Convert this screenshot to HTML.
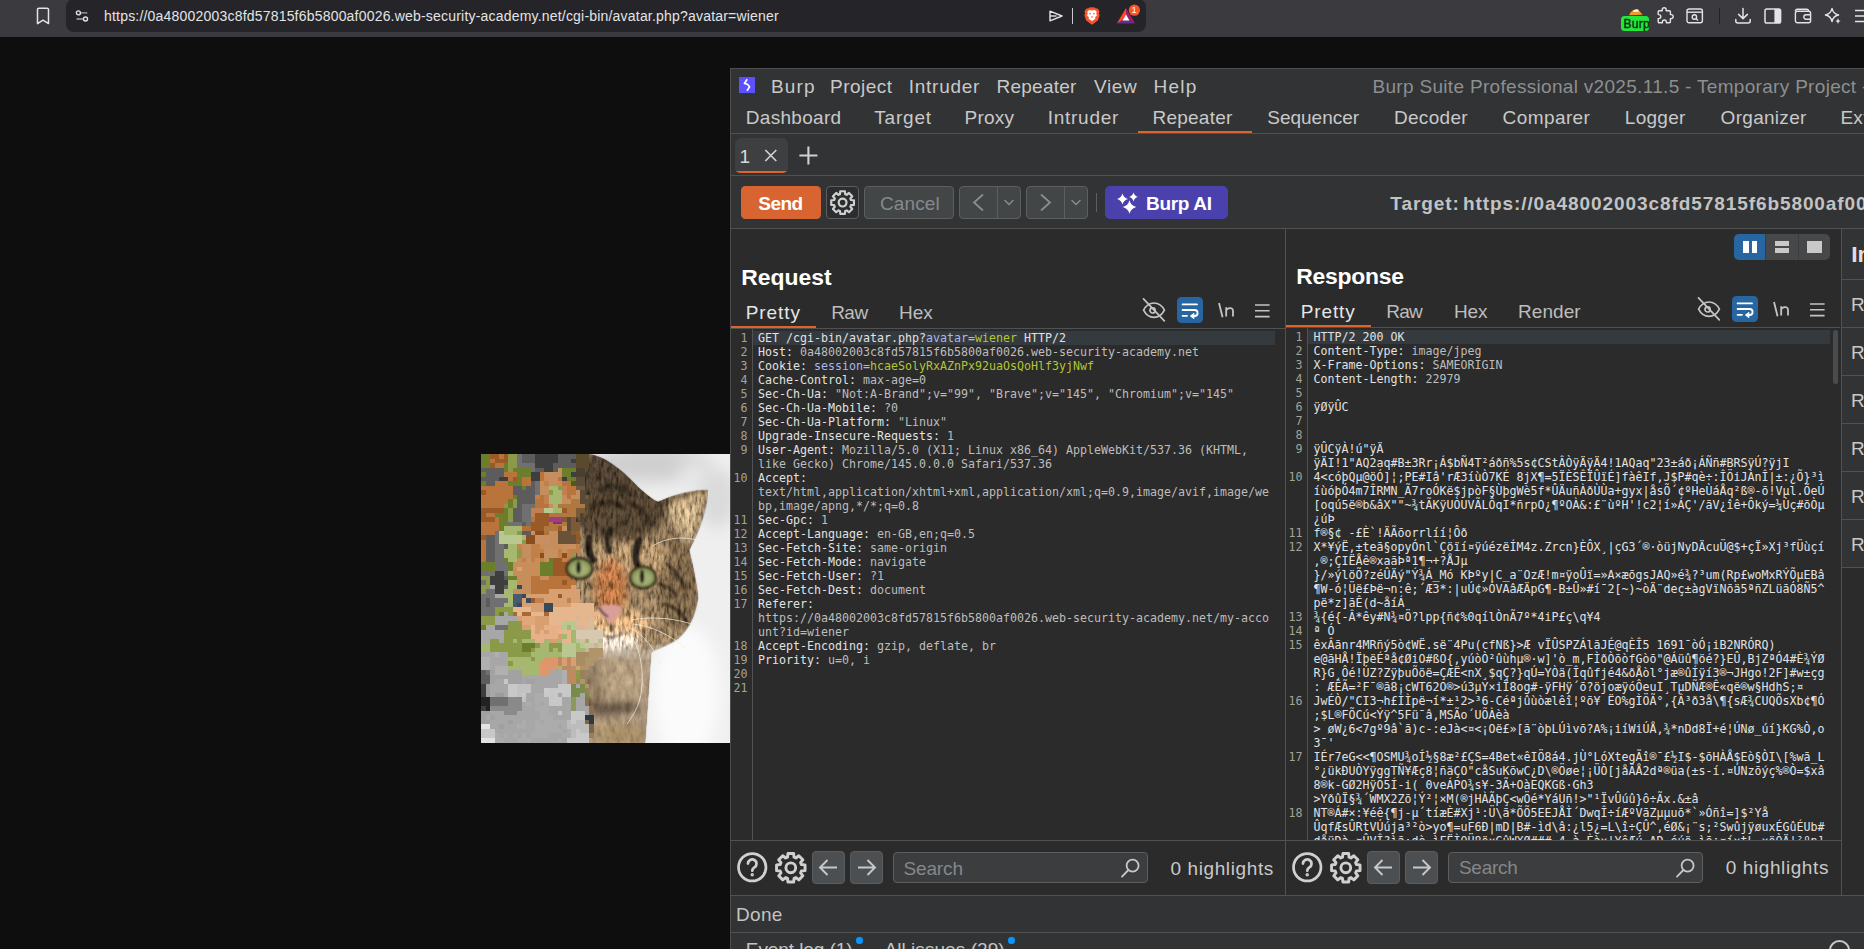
<!DOCTYPE html>
<html lang="en"><head><meta charset="utf-8"><title>avatar.php</title>
<style>
*{box-sizing:border-box;margin:0;padding:0}
html,body{width:1864px;height:949px;overflow:hidden;background:#0e0e0e}
body{position:relative;font-family:"Liberation Sans", sans-serif;}
.a{position:absolute}
.t{position:absolute;white-space:pre;line-height:1;font-family:"Liberation Sans", sans-serif}
.ln{position:absolute;background:#4f5153}
.ed{position:absolute;font-family:"DejaVu Sans Mono", "Liberation Mono", monospace;font-size:11.63px;line-height:14px;white-space:pre;color:#d4d4d4}
.ed div{height:14px}
.ed .h{color:#e2e2e2}
.ed .v{color:#bdbdbd}
.ed .p{color:#a9b7ee}
.ed .g{color:#b4c632}
.no{position:absolute;font-family:"DejaVu Sans Mono", "Liberation Mono", monospace;font-size:11.63px;line-height:14px;white-space:pre;color:#a3a396;text-align:right;width:20px}
.no div{height:14px}
.btn{position:absolute;border-radius:4px}
svg{position:absolute;overflow:visible}
</style></head><body>
<div class="a" style="left:0;top:0;width:1864px;height:37px;background:#3b3b3f"></div>
<div class="a" style="left:66px;top:-1px;width:1080px;height:32.6px;background:#252529;border-radius:8px"></div>
<svg style="left:36px;top:7px" width="14" height="18" viewBox="0 0 14 18" fill="none" stroke="#e4e4e7" stroke-width="1.5" stroke-linejoin="round"><path d="M1.5 2.6a1.4 1.4 0 0 1 1.4-1.4h8.2a1.4 1.4 0 0 1 1.4 1.4V16.6L7 13.2 1.5 16.6Z"/></svg>
<svg style="left:75px;top:9px" width="14" height="14" viewBox="0 0 14 14" fill="none" stroke="#e4e4e7" stroke-width="1.4" stroke-linecap="round"><circle cx="3.4" cy="3.9" r="2"/><path d="M6.6 3.9H11.8" stroke="#a9a9ad"/><circle cx="10.5" cy="10" r="2"/><path d="M2 10H7.4" stroke="#a9a9ad"/></svg>
<svg style="left:1048px;top:9px" width="16" height="14" viewBox="0 0 16 14" fill="none" stroke="#e4e4e7" stroke-width="1.4" stroke-linejoin="round"><path d="M2 2.2 14 7 2 11.8Z"/><path d="M2 7H8.6"/></svg>
<div class="a" style="left:1072px;top:8px;width:1px;height:16px;background:#c9c9cc"></div>
<svg style="left:1084px;top:7px" width="16" height="18" viewBox="0 0 16 18"><path d="M8 0.2 10.6 0.4 12 1.6 13.6 1.4 15.6 4.4 15 6 15.6 8.4 13.8 13.4 8 17.8 2.2 13.4 0.4 8.4 1 6 0.4 4.4 2.4 1.4 4 1.6 5.4 0.4Z" fill="#fb542b"/><path d="M8 3.4 10.8 3 12.8 4.8 12.2 6.6 13 8.4 11 10.2 11.4 11.8 8 14 4.6 11.8 5 10.2 3 8.4 3.8 6.6 3.2 4.8 5.2 3Z" fill="#fff"/><path d="M5.2 5.8 7 6.4 6.6 7.6 5.4 7.2ZM10.8 5.8 9 6.4 9.4 7.6 10.6 7.2ZM7.2 9.6 8 9 8.8 9.6 8 11.4Z" fill="#fb542b"/></svg>
<svg style="left:1116px;top:7px" width="26" height="18" viewBox="0 0 26 18"><path d="M10 1 0.8 16.6 10 11.4Z" fill="#ff4724"/><path d="M10 1 19.2 16.6 10 11.4Z" fill="#9e1f63"/><path d="M0.8 16.6H19.2L10 11.4Z" fill="#662d91"/><path d="M10 7.6 6.6 13.4H13.4Z" fill="#fff"/><circle cx="18.4" cy="3.2" r="5.6" fill="#fb542b"/></svg>
<span class="t" style="left:1131.6px;top:5.4px;font-size:9.5px;color:#fff;font-weight:400">1</span>
<svg style="left:1628px;top:8px" width="16" height="8" viewBox="0 0 16 8"><path d="M1 7.2C3 3 6 0.6 10 1.2l4.6 5.6Z" fill="#f59a23"/><path d="M5 2.4 9.4 1.6 11 3.6 6 4Z" fill="#fff"/></svg>
<div class="a" style="left:1621px;top:16px;width:28px;height:14.5px;border-radius:3.5px;background:#22e63c;overflow:hidden"><span class="t" style="left:2.4px;top:1.9px;font-size:12px;color:#0b2b10;letter-spacing:0.3px;-webkit-text-stroke:0.35px #0b2b10">Burp</span></div>
<svg style="left:1655.4px;top:6px" width="19" height="19" viewBox="0 0 19 19" fill="none" stroke="#e4e4e7" stroke-width="1.4" stroke-linejoin="round"><path d="M7.2 3.8a2 2 0 1 1 4 0V4.8H14.4a1 1 0 0 1 1 1V8.6H16.2a2 2 0 1 1 0 4H15.4V15.8a1 1 0 0 1-1 1H11.4V16a2 2 0 1 0-4 0v.8H4.2a1 1 0 0 1-1-1V12.6H3.8a2 2 0 1 0 0-4H3.2V5.8a1 1 0 0 1 1-1H7.2Z"/></svg>
<svg style="left:1686px;top:8px" width="18" height="16" viewBox="0 0 18 16" fill="none" stroke="#e4e4e7" stroke-width="1.4"><rect x="1" y="1" width="15.4" height="13.8" rx="2"/><path d="M1 4.2H16.4"/><circle cx="8.4" cy="9" r="2.2"/><path d="M10 10.6 12 12.6"/></svg>
<div class="a" style="left:1718.5px;top:8px;width:1.5px;height:16px;background:#232326"></div>
<svg style="left:1734px;top:7px" width="18" height="18" viewBox="0 0 18 18" fill="none" stroke="#e4e4e7" stroke-width="1.5" stroke-linecap="round" stroke-linejoin="round"><path d="M9 1.4V11.4M4.6 7.4 9 11.6 13.4 7.4"/><path d="M1.8 12.6V14a2 2 0 0 0 2 2H14.2a2 2 0 0 0 2-2V12.6"/></svg>
<svg style="left:1764px;top:8px" width="18" height="16" viewBox="0 0 18 16"><rect x="1" y="1" width="15.6" height="14" rx="1.8" fill="none" stroke="#e4e4e7" stroke-width="1.5"/><path d="M10.4 1H15a1.6 1.6 0 0 1 1.6 1.6V13.4A1.6 1.6 0 0 1 15 15H10.4Z" fill="#e4e4e7"/></svg>
<svg style="left:1794px;top:8px" width="18" height="16" viewBox="0 0 18 16" fill="none" stroke="#e4e4e7" stroke-width="1.4" stroke-linejoin="round"><path d="M1.4 3.2a2 2 0 0 1 2-2H12.6a2 2 0 0 1 2 2"/><rect x="1.4" y="3.2" width="15.2" height="11.6" rx="2"/><path d="M16.6 6.8H12a2.2 2.2 0 0 0 0 4.4H16.6"/></svg>
<svg style="left:1824px;top:7px" width="18" height="18" viewBox="0 0 18 18" fill="none" stroke="#e4e4e7" stroke-width="1.4" stroke-linejoin="round"><path d="M8 1.4C8.8 5.4 10.4 7.2 14.6 8 10.4 8.8 8.8 10.6 8 14.6 7.2 10.6 5.6 8.8 1.4 8 5.6 7.2 7.2 5.4 8 1.4Z"/><path d="M14 11c.4 2 1.1 2.8 3 3.1-1.9.3-2.6 1.1-3 3.1-.4-2-1.1-2.8-3-3.1 1.9-.3 2.6-1.1 3-3.1Z" fill="#e4e4e7" stroke="none"/></svg>
<svg style="left:1854.5px;top:9px" width="12" height="14" viewBox="0 0 12 14" stroke="#e4e4e7" stroke-width="1.5" fill="none"><path d="M0 1.4H12M0 7H12M0 12.6H12"/></svg>
<svg style="left:481px;top:454px;overflow:hidden" width="249" height="289" viewBox="0 0 249 289"><defs><filter id="b2" x="-20%" y="-20%" width="140%" height="140%"><feGaussianBlur stdDeviation="2"/></filter><filter id="b4" x="-30%" y="-30%" width="160%" height="160%"><feGaussianBlur stdDeviation="4"/></filter><filter id="b8" x="-40%" y="-40%" width="180%" height="180%"><feGaussianBlur stdDeviation="8"/></filter><filter id="b1" x="-20%" y="-20%" width="140%" height="140%"><feGaussianBlur stdDeviation="0.8"/></filter><filter id="fur" x="0" y="0" width="100%" height="100%"><feTurbulence type="fractalNoise" baseFrequency="0.34 0.11" numOctaves="3" seed="11" result="n"/><feColorMatrix in="n" type="matrix" values="1.5 1.5 0 0 -0.95  1.5 1.5 0 0 -0.95  1.5 1.5 0 0 -0.95  0 0 0 0 1" result="g"/><feComposite in="SourceGraphic" in2="g" operator="arithmetic" k1="1.55" k2="0.45" k3="0" k4="0" result="m"/><feComposite in="m" in2="SourceGraphic" operator="in"/></filter><filter id="fur2" x="0" y="0" width="100%" height="100%"><feTurbulence type="fractalNoise" baseFrequency="0.2 0.09" numOctaves="3" seed="5" result="n"/><feColorMatrix in="n" type="matrix" values="0.8 0.8 0 0 -0.3  0.8 0.8 0 0 -0.3  0.8 0.8 0 0 -0.3  0 0 0 0 1" result="g"/><feComposite in="SourceGraphic" in2="g" operator="arithmetic" k1="0.9" k2="0.62" k3="0" k4="0" result="m"/><feComposite in="m" in2="SourceGraphic" operator="in"/></filter><linearGradient id="gt" x1="0" y1="0" x2="0" y2="1"><stop offset="0.655" stop-color="#fff"/><stop offset="0.715" stop-color="#000"/></linearGradient><linearGradient id="gb" x1="0" y1="0" x2="0" y2="1"><stop offset="0.655" stop-color="#000"/><stop offset="0.715" stop-color="#fff"/></linearGradient><mask id="top" maskUnits="userSpaceOnUse" x="0" y="0" width="249" height="289"><rect width="249" height="289" fill="url(#gt)"/></mask><mask id="bot" maskUnits="userSpaceOnUse" x="0" y="0" width="249" height="289"><rect width="249" height="289" fill="url(#gb)"/></mask><clipPath id="hc"><path d="M88 0H108C122 2 140 14 158 34C166 41 172 46 177 48C194 40 212 36 227 36C226 56 218 78 208 96C212 112 216 130 217 144C214 164 206 180 192 188C182 193 174 196 170 198C168 230 166 260 164 289H100C96 262 90 240 92 222C84 200 70 170 72 130C74 90 80 40 88 0Z"/></clipPath></defs><rect width="249" height="289" fill="#efefef"/><g filter="url(#b8)"><ellipse cx="170" cy="10" rx="60" ry="18" fill="#cfcfcf"/><ellipse cx="236" cy="44" rx="20" ry="30" fill="#dadada"/><ellipse cx="205" cy="240" rx="34" ry="70" fill="#fbfbfb"/><ellipse cx="212" cy="20" rx="14" ry="14" fill="#e6e6e6"/></g><g mask="url(#bot)"><g filter="url(#fur2)"><g filter="url(#b1)"><path d="M88 0H108C122 2 140 14 158 34C166 41 172 46 177 48C194 40 212 36 227 36C226 56 218 78 208 96C212 112 216 130 217 144C214 164 206 180 192 188C182 193 174 196 170 198C168 230 166 260 164 289H100C96 262 90 240 92 222C84 200 70 170 72 130C74 90 80 40 88 0Z" fill="#8a7354"/></g><g clip-path="url(#hc)"><g filter="url(#b4)"><ellipse cx="138" cy="48" rx="52" ry="40" fill="#4a3a2a"/><ellipse cx="118" cy="16" rx="32" ry="18" fill="#443829"/><ellipse cx="198" cy="126" rx="22" ry="50" fill="#6e5a40"/><ellipse cx="150" cy="105" rx="40" ry="18" fill="#a08460"/><ellipse cx="130" cy="135" rx="16" ry="30" fill="#a8693c"/><ellipse cx="134" cy="170" rx="36" ry="14" fill="#c29a6e"/><ellipse cx="130" cy="188" rx="30" ry="8" fill="#e0d2c2"/><rect x="80" y="200" width="100" height="100" fill="#a8937a"/><ellipse cx="140" cy="228" rx="24" ry="24" fill="#b09a7c"/><ellipse cx="112" cy="230" rx="10" ry="26" fill="#8f7a60"/><ellipse cx="128" cy="254" rx="34" ry="7" fill="#5f4e3e"/><ellipse cx="140" cy="280" rx="30" ry="12" fill="#a58c66"/><path d="M186 52 224 40 208 92Z" fill="#b8a07c"/></g><g filter="url(#b1)" stroke="#241c14" stroke-linecap="round" fill="none"><path d="M108 84C106 92 108 100 112 106" stroke-width="7"/><path d="M128 76C126 84 126 92 128 98" stroke-width="5"/><path d="M158 86C154 96 154 104 156 110" stroke-width="7"/><path d="M120 36C128 30 140 32 148 40" stroke-width="6" stroke="#2e261c"/><path d="M112 54C120 46 134 46 142 54" stroke-width="5" stroke="#30271c"/><path d="M150 50C158 52 166 60 170 70" stroke-width="5" stroke="#30271c"/><path d="M186 110C194 116 200 124 204 134" stroke-width="4" stroke="#3a2e20"/><path d="M184 150C192 152 200 158 204 166" stroke-width="4" stroke="#3a2e20"/><path d="M178 130C186 132 192 136 196 142" stroke-width="3" stroke="#3a2e20"/><path d="M180 50C196 42 212 38 226 37" stroke-width="1.6" stroke="#6a5234"/></g></g></g></g><g mask="url(#top)"><g filter="url(#fur)"><g filter="url(#b1)"><path d="M88 0H108C122 2 140 14 158 34C166 41 172 46 177 48C194 40 212 36 227 36C226 56 218 78 208 96C212 112 216 130 217 144C214 164 206 180 192 188C182 193 174 196 170 198C168 230 166 260 164 289H100C96 262 90 240 92 222C84 200 70 170 72 130C74 90 80 40 88 0Z" fill="#8a7354"/></g><g clip-path="url(#hc)"><g filter="url(#b4)"><ellipse cx="138" cy="48" rx="52" ry="40" fill="#4a3a2a"/><ellipse cx="118" cy="16" rx="32" ry="18" fill="#443829"/><ellipse cx="198" cy="126" rx="22" ry="50" fill="#6e5a40"/><ellipse cx="150" cy="105" rx="40" ry="18" fill="#a08460"/><ellipse cx="130" cy="135" rx="16" ry="30" fill="#a8693c"/><ellipse cx="134" cy="170" rx="36" ry="14" fill="#c29a6e"/><ellipse cx="130" cy="188" rx="30" ry="8" fill="#e0d2c2"/><rect x="80" y="200" width="100" height="100" fill="#a8937a"/><ellipse cx="140" cy="228" rx="24" ry="24" fill="#b09a7c"/><ellipse cx="112" cy="230" rx="10" ry="26" fill="#8f7a60"/><ellipse cx="128" cy="254" rx="34" ry="7" fill="#5f4e3e"/><ellipse cx="140" cy="280" rx="30" ry="12" fill="#a58c66"/><path d="M186 52 224 40 208 92Z" fill="#b8a07c"/></g><g filter="url(#b1)" stroke="#241c14" stroke-linecap="round" fill="none"><path d="M108 84C106 92 108 100 112 106" stroke-width="7"/><path d="M128 76C126 84 126 92 128 98" stroke-width="5"/><path d="M158 86C154 96 154 104 156 110" stroke-width="7"/><path d="M120 36C128 30 140 32 148 40" stroke-width="6" stroke="#2e261c"/><path d="M112 54C120 46 134 46 142 54" stroke-width="5" stroke="#30271c"/><path d="M150 50C158 52 166 60 170 70" stroke-width="5" stroke="#30271c"/><path d="M186 110C194 116 200 124 204 134" stroke-width="4" stroke="#3a2e20"/><path d="M184 150C192 152 200 158 204 166" stroke-width="4" stroke="#3a2e20"/><path d="M178 130C186 132 192 136 196 142" stroke-width="3" stroke="#3a2e20"/><path d="M180 50C196 42 212 38 226 37" stroke-width="1.6" stroke="#6a5234"/></g></g></g></g><g filter="url(#b1)"><path d="M117 153C122 150 136 150 141 153C141 160 134 165 130 170C126 165 117 160 117 153Z" fill="#d9a09a"/><path d="M118 153C120 158 124 161 127 163M130 170V178" stroke="#2a1c16" stroke-width="2" fill="none"/><path d="M120 180C126 184 134 184 142 179" stroke="#5a4634" stroke-width="1.4" fill="none"/></g><g stroke="#f4efe6" stroke-width="0.8" fill="none" opacity="0.9"><path d="M146 176C158 190 164 214 160 240C158 252 152 262 146 270"/><path d="M150 174C164 182 174 196 180 210"/><path d="M152 170C170 172 188 180 204 194"/><path d="M150 166C170 162 196 164 216 172"/><path d="M172 92C184 84 200 82 216 86"/></g><g shape-rendering="crispEdges"><rect x="0" y="0" width="9" height="4.5" fill="#6c7d2c"/><rect x="9" y="0" width="9" height="4.5" fill="#9a5a28"/><rect x="18" y="0" width="4.5" height="4.5" fill="#b9743c"/><rect x="22.5" y="0" width="4.5" height="4.5" fill="#9a5a28"/><rect x="27" y="0" width="9" height="4.5" fill="#8a9a48"/><rect x="36" y="0" width="4.5" height="4.5" fill="#707070"/><rect x="40.5" y="0" width="13.5" height="4.5" fill="#5c5c5c"/><rect x="54" y="0" width="22.5" height="4.5" fill="#3e3e3e"/><rect x="76.5" y="0" width="18" height="4.5" fill="#5c5c5c"/><rect x="94.5" y="0" width="13.5" height="4.5" fill="#5a4a2c"/><rect x="0" y="4.5" width="9" height="4.5" fill="#6c7d2c"/><rect x="9" y="4.5" width="4.5" height="4.5" fill="#b9743c"/><rect x="13.5" y="4.5" width="13.5" height="4.5" fill="#9a5a28"/><rect x="27" y="4.5" width="9" height="4.5" fill="#8a9a48"/><rect x="36" y="4.5" width="4.5" height="4.5" fill="#707070"/><rect x="40.5" y="4.5" width="13.5" height="4.5" fill="#5c5c5c"/><rect x="54" y="4.5" width="22.5" height="4.5" fill="#3e3e3e"/><rect x="76.5" y="4.5" width="13.5" height="4.5" fill="#5c5c5c"/><rect x="90" y="4.5" width="4.5" height="4.5" fill="#3e3e3e"/><rect x="94.5" y="4.5" width="13.5" height="4.5" fill="#5a4a2c"/><rect x="0" y="9" width="9" height="4.5" fill="#6c7d2c"/><rect x="9" y="9" width="4.5" height="4.5" fill="#9a5a28"/><rect x="13.5" y="9" width="9" height="4.5" fill="#b9743c"/><rect x="22.5" y="9" width="4.5" height="4.5" fill="#6c7d2c"/><rect x="27" y="9" width="9" height="4.5" fill="#8a9a48"/><rect x="36" y="9" width="18" height="4.5" fill="#707070"/><rect x="54" y="9" width="18" height="4.5" fill="#3e3e3e"/><rect x="72" y="9" width="22.5" height="4.5" fill="#5c5c5c"/><rect x="94.5" y="9" width="13.5" height="4.5" fill="#5a4a2c"/><rect x="0" y="13.5" width="22.5" height="4.5" fill="#5c5c5c"/><rect x="22.5" y="13.5" width="4.5" height="4.5" fill="#6c7d2c"/><rect x="27" y="13.5" width="4.5" height="4.5" fill="#8a9a48"/><rect x="31.5" y="13.5" width="18" height="4.5" fill="#6c7d2c"/><rect x="49.5" y="13.5" width="4.5" height="4.5" fill="#707070"/><rect x="54" y="13.5" width="9" height="4.5" fill="#5c5c5c"/><rect x="63" y="13.5" width="9" height="4.5" fill="#3e3e3e"/><rect x="72" y="13.5" width="4.5" height="4.5" fill="#5c5c5c"/><rect x="76.5" y="13.5" width="4.5" height="4.5" fill="#c68e5c"/><rect x="81" y="13.5" width="13.5" height="4.5" fill="#6c7d2c"/><rect x="94.5" y="13.5" width="9" height="4.5" fill="#4a4030"/><rect x="0" y="18" width="4.5" height="4.5" fill="#6c7d2c"/><rect x="4.5" y="18" width="18" height="4.5" fill="#5c5c5c"/><rect x="22.5" y="18" width="13.5" height="4.5" fill="#b9743c"/><rect x="36" y="18" width="13.5" height="4.5" fill="#6c7d2c"/><rect x="49.5" y="18" width="9" height="4.5" fill="#3e3e3e"/><rect x="58.5" y="18" width="4.5" height="4.5" fill="#b9743c"/><rect x="63" y="18" width="18" height="4.5" fill="#c68e5c"/><rect x="81" y="18" width="9" height="4.5" fill="#6c7d2c"/><rect x="90" y="18" width="4.5" height="4.5" fill="#3e3e3e"/><rect x="94.5" y="18" width="9" height="4.5" fill="#4a4030"/><rect x="0" y="22.5" width="18" height="4.5" fill="#5c5c5c"/><rect x="18" y="22.5" width="9" height="4.5" fill="#3e3e3e"/><rect x="27" y="22.5" width="4.5" height="4.5" fill="#b9743c"/><rect x="31.5" y="22.5" width="4.5" height="4.5" fill="#9a5a28"/><rect x="36" y="22.5" width="4.5" height="4.5" fill="#6c7d2c"/><rect x="40.5" y="22.5" width="9" height="4.5" fill="#b9743c"/><rect x="49.5" y="22.5" width="9" height="4.5" fill="#3e3e3e"/><rect x="58.5" y="22.5" width="4.5" height="4.5" fill="#b9743c"/><rect x="63" y="22.5" width="4.5" height="4.5" fill="#c88a58"/><rect x="67.5" y="22.5" width="9" height="4.5" fill="#c68e5c"/><rect x="76.5" y="22.5" width="4.5" height="4.5" fill="#b9743c"/><rect x="81" y="22.5" width="4.5" height="4.5" fill="#3e3e3e"/><rect x="85.5" y="22.5" width="9" height="4.5" fill="#6c7d2c"/><rect x="94.5" y="22.5" width="9" height="4.5" fill="#5a4a38"/><rect x="0" y="27" width="4.5" height="4.5" fill="#6c7d2c"/><rect x="4.5" y="27" width="9" height="4.5" fill="#5c5c5c"/><rect x="13.5" y="27" width="13.5" height="4.5" fill="#b9743c"/><rect x="27" y="27" width="13.5" height="4.5" fill="#6c7d2c"/><rect x="40.5" y="27" width="9" height="4.5" fill="#b9743c"/><rect x="49.5" y="27" width="4.5" height="4.5" fill="#5c5c5c"/><rect x="54" y="27" width="4.5" height="4.5" fill="#707070"/><rect x="58.5" y="27" width="4.5" height="4.5" fill="#c68e5c"/><rect x="63" y="27" width="4.5" height="4.5" fill="#c08050"/><rect x="67.5" y="27" width="9" height="4.5" fill="#c68e5c"/><rect x="76.5" y="27" width="4.5" height="4.5" fill="#c88a58"/><rect x="81" y="27" width="9" height="4.5" fill="#b9743c"/><rect x="90" y="27" width="4.5" height="4.5" fill="#4a5a20"/><rect x="94.5" y="27" width="9" height="4.5" fill="#5a4a38"/><rect x="0" y="31.5" width="31.5" height="4.5" fill="#b9743c"/><rect x="31.5" y="31.5" width="9" height="4.5" fill="#5c5c5c"/><rect x="40.5" y="31.5" width="4.5" height="4.5" fill="#6c7d2c"/><rect x="45" y="31.5" width="9" height="4.5" fill="#5c5c5c"/><rect x="54" y="31.5" width="4.5" height="4.5" fill="#707070"/><rect x="58.5" y="31.5" width="9" height="4.5" fill="#c68e5c"/><rect x="67.5" y="31.5" width="9" height="4.5" fill="#a6b870"/><rect x="76.5" y="31.5" width="4.5" height="4.5" fill="#8a9a48"/><rect x="81" y="31.5" width="4.5" height="4.5" fill="#c08050"/><rect x="85.5" y="31.5" width="9" height="4.5" fill="#b9743c"/><rect x="94.5" y="31.5" width="9" height="4.5" fill="#6a5a40"/><rect x="0" y="36" width="4.5" height="4.5" fill="#9a5a28"/><rect x="4.5" y="36" width="27" height="4.5" fill="#b9743c"/><rect x="31.5" y="36" width="22.5" height="4.5" fill="#5c5c5c"/><rect x="54" y="36" width="4.5" height="4.5" fill="#707070"/><rect x="58.5" y="36" width="9" height="4.5" fill="#c68e5c"/><rect x="67.5" y="36" width="4.5" height="4.5" fill="#8a9a48"/><rect x="72" y="36" width="9" height="4.5" fill="#a6b870"/><rect x="81" y="36" width="4.5" height="4.5" fill="#c08050"/><rect x="85.5" y="36" width="9" height="4.5" fill="#b9743c"/><rect x="94.5" y="36" width="4.5" height="4.5" fill="#c68e5c"/><rect x="99" y="36" width="4.5" height="4.5" fill="#5a4a38"/><rect x="0" y="40.5" width="31.5" height="4.5" fill="#b9743c"/><rect x="31.5" y="40.5" width="4.5" height="4.5" fill="#6c7d2c"/><rect x="36" y="40.5" width="18" height="4.5" fill="#5c5c5c"/><rect x="54" y="40.5" width="4.5" height="4.5" fill="#c08050"/><rect x="58.5" y="40.5" width="4.5" height="4.5" fill="#b9743c"/><rect x="63" y="40.5" width="4.5" height="4.5" fill="#c08050"/><rect x="67.5" y="40.5" width="13.5" height="4.5" fill="#a6b870"/><rect x="81" y="40.5" width="4.5" height="4.5" fill="#c68e5c"/><rect x="85.5" y="40.5" width="4.5" height="4.5" fill="#b9743c"/><rect x="90" y="40.5" width="9" height="4.5" fill="#c68e5c"/><rect x="99" y="40.5" width="4.5" height="4.5" fill="#5a4a38"/><rect x="103.5" y="40.5" width="4.5" height="4.5" fill="#6a5a40"/><rect x="0" y="45" width="27" height="4.5" fill="#b9743c"/><rect x="27" y="45" width="4.5" height="4.5" fill="#6c7d2c"/><rect x="31.5" y="45" width="4.5" height="4.5" fill="#8a9a48"/><rect x="36" y="45" width="18" height="4.5" fill="#5c5c5c"/><rect x="54" y="45" width="9" height="4.5" fill="#b9743c"/><rect x="63" y="45" width="4.5" height="4.5" fill="#c08050"/><rect x="67.5" y="45" width="13.5" height="4.5" fill="#a6b870"/><rect x="81" y="45" width="9" height="4.5" fill="#c68e5c"/><rect x="90" y="45" width="9" height="4.5" fill="#b07840"/><rect x="99" y="45" width="9" height="4.5" fill="#5a4a38"/><rect x="0" y="49.5" width="22.5" height="4.5" fill="#b9743c"/><rect x="22.5" y="49.5" width="4.5" height="4.5" fill="#8a9a48"/><rect x="27" y="49.5" width="4.5" height="4.5" fill="#6c7d2c"/><rect x="31.5" y="49.5" width="4.5" height="4.5" fill="#8a9a48"/><rect x="36" y="49.5" width="4.5" height="4.5" fill="#5c5c5c"/><rect x="40.5" y="49.5" width="13.5" height="4.5" fill="#707070"/><rect x="54" y="49.5" width="13.5" height="4.5" fill="#b9743c"/><rect x="67.5" y="49.5" width="4.5" height="4.5" fill="#c68e5c"/><rect x="72" y="49.5" width="4.5" height="4.5" fill="#a6b870"/><rect x="76.5" y="49.5" width="27" height="4.5" fill="#b07840"/><rect x="103.5" y="49.5" width="4.5" height="4.5" fill="#5a4a38"/><rect x="0" y="54" width="22.5" height="4.5" fill="#9a5a28"/><rect x="22.5" y="54" width="4.5" height="4.5" fill="#6c7d2c"/><rect x="27" y="54" width="4.5" height="4.5" fill="#8a9a48"/><rect x="31.5" y="54" width="9" height="4.5" fill="#5c5c5c"/><rect x="40.5" y="54" width="9" height="4.5" fill="#707070"/><rect x="49.5" y="54" width="13.5" height="4.5" fill="#c08050"/><rect x="63" y="54" width="9" height="4.5" fill="#b8c890"/><rect x="72" y="54" width="9" height="4.5" fill="#a6b870"/><rect x="81" y="54" width="4.5" height="4.5" fill="#9a5a28"/><rect x="85.5" y="54" width="9" height="4.5" fill="#b07840"/><rect x="94.5" y="54" width="9" height="4.5" fill="#7a5a38"/><rect x="0" y="58.5" width="4.5" height="4.5" fill="#9a5a28"/><rect x="4.5" y="58.5" width="9" height="4.5" fill="#b9743c"/><rect x="13.5" y="58.5" width="13.5" height="4.5" fill="#6c7d2c"/><rect x="27" y="58.5" width="4.5" height="4.5" fill="#8a9a48"/><rect x="31.5" y="58.5" width="9" height="4.5" fill="#5c5c5c"/><rect x="40.5" y="58.5" width="9" height="4.5" fill="#707070"/><rect x="49.5" y="58.5" width="4.5" height="4.5" fill="#c08050"/><rect x="54" y="58.5" width="13.5" height="4.5" fill="#9a5a28"/><rect x="67.5" y="58.5" width="27" height="4.5" fill="#b07840"/><rect x="94.5" y="58.5" width="4.5" height="4.5" fill="#7a5a38"/><rect x="0" y="63" width="13.5" height="4.5" fill="#9a5a28"/><rect x="13.5" y="63" width="4.5" height="4.5" fill="#b9743c"/><rect x="18" y="63" width="9" height="4.5" fill="#6c7d2c"/><rect x="27" y="63" width="4.5" height="4.5" fill="#8a9a48"/><rect x="31.5" y="63" width="9" height="4.5" fill="#5c5c5c"/><rect x="40.5" y="63" width="9" height="4.5" fill="#707070"/><rect x="49.5" y="63" width="4.5" height="4.5" fill="#b07840"/><rect x="54" y="63" width="13.5" height="4.5" fill="#9a5a28"/><rect x="67.5" y="63" width="13.5" height="4.5" fill="#b07840"/><rect x="81" y="63" width="4.5" height="4.5" fill="#7a5a38"/><rect x="85.5" y="63" width="4.5" height="4.5" fill="#5a4a38"/><rect x="90" y="63" width="4.5" height="4.5" fill="#7a5a38"/><rect x="0" y="67.5" width="18" height="4.5" fill="#b9743c"/><rect x="18" y="67.5" width="9" height="4.5" fill="#6c7d2c"/><rect x="27" y="67.5" width="13.5" height="4.5" fill="#707070"/><rect x="40.5" y="67.5" width="4.5" height="4.5" fill="#5c5c5c"/><rect x="45" y="67.5" width="4.5" height="4.5" fill="#707070"/><rect x="49.5" y="67.5" width="18" height="4.5" fill="#9a5a28"/><rect x="67.5" y="67.5" width="18" height="4.5" fill="#b07840"/><rect x="85.5" y="67.5" width="4.5" height="4.5" fill="#5a4a38"/><rect x="90" y="67.5" width="9" height="4.5" fill="#7a5a38"/><rect x="0" y="72" width="18" height="4.5" fill="#b9743c"/><rect x="18" y="72" width="4.5" height="4.5" fill="#6c7d2c"/><rect x="22.5" y="72" width="18" height="4.5" fill="#a6b870"/><rect x="40.5" y="72" width="9" height="4.5" fill="#b07038"/><rect x="49.5" y="72" width="13.5" height="4.5" fill="#9a5a28"/><rect x="63" y="72" width="13.5" height="4.5" fill="#b07840"/><rect x="76.5" y="72" width="4.5" height="4.5" fill="#9a5a28"/><rect x="81" y="72" width="4.5" height="4.5" fill="#c68e5c"/><rect x="85.5" y="72" width="4.5" height="4.5" fill="#5a4a38"/><rect x="90" y="72" width="9" height="4.5" fill="#7a5a38"/><rect x="0" y="76.5" width="13.5" height="4.5" fill="#b9743c"/><rect x="13.5" y="76.5" width="4.5" height="4.5" fill="#707070"/><rect x="18" y="76.5" width="4.5" height="4.5" fill="#b8c890"/><rect x="22.5" y="76.5" width="13.5" height="4.5" fill="#a6b870"/><rect x="36" y="76.5" width="4.5" height="4.5" fill="#8a9a48"/><rect x="40.5" y="76.5" width="9" height="4.5" fill="#5c5c5c"/><rect x="49.5" y="76.5" width="4.5" height="4.5" fill="#c89060"/><rect x="54" y="76.5" width="9" height="4.5" fill="#8a4e1e"/><rect x="63" y="76.5" width="4.5" height="4.5" fill="#b07038"/><rect x="67.5" y="76.5" width="9" height="4.5" fill="#c68e5c"/><rect x="76.5" y="76.5" width="13.5" height="4.5" fill="#6a5238"/><rect x="90" y="76.5" width="4.5" height="4.5" fill="#8a5a30"/><rect x="94.5" y="76.5" width="4.5" height="4.5" fill="#9a5a28"/><rect x="0" y="81" width="4.5" height="4.5" fill="#9a5a28"/><rect x="4.5" y="81" width="9" height="4.5" fill="#5c5c5c"/><rect x="13.5" y="81" width="4.5" height="4.5" fill="#707070"/><rect x="18" y="81" width="22.5" height="4.5" fill="#b8c890"/><rect x="40.5" y="81" width="4.5" height="4.5" fill="#a6b870"/><rect x="45" y="81" width="9" height="4.5" fill="#8a4e1e"/><rect x="54" y="81" width="13.5" height="4.5" fill="#c89060"/><rect x="67.5" y="81" width="9" height="4.5" fill="#c68e5c"/><rect x="76.5" y="81" width="18" height="4.5" fill="#6a5238"/><rect x="94.5" y="81" width="4.5" height="4.5" fill="#8a5a30"/><rect x="0" y="85.5" width="4.5" height="4.5" fill="#b9743c"/><rect x="4.5" y="85.5" width="9" height="4.5" fill="#5c5c5c"/><rect x="13.5" y="85.5" width="4.5" height="4.5" fill="#707070"/><rect x="18" y="85.5" width="22.5" height="4.5" fill="#b8c890"/><rect x="40.5" y="85.5" width="4.5" height="4.5" fill="#8a9a48"/><rect x="45" y="85.5" width="9" height="4.5" fill="#8a4e1e"/><rect x="54" y="85.5" width="13.5" height="4.5" fill="#c89060"/><rect x="67.5" y="85.5" width="9" height="4.5" fill="#c68e5c"/><rect x="76.5" y="85.5" width="18" height="4.5" fill="#6a5238"/><rect x="94.5" y="85.5" width="4.5" height="4.5" fill="#8a5a30"/><rect x="0" y="90" width="4.5" height="4.5" fill="#b9743c"/><rect x="4.5" y="90" width="9" height="4.5" fill="#5c5c5c"/><rect x="13.5" y="90" width="9" height="4.5" fill="#707070"/><rect x="22.5" y="90" width="4.5" height="4.5" fill="#5c5c5c"/><rect x="27" y="90" width="9" height="4.5" fill="#a6b870"/><rect x="36" y="90" width="4.5" height="4.5" fill="#c48650"/><rect x="40.5" y="90" width="9" height="4.5" fill="#c68e5c"/><rect x="49.5" y="90" width="9" height="4.5" fill="#c08048"/><rect x="58.5" y="90" width="22.5" height="4.5" fill="#c68e5c"/><rect x="81" y="90" width="13.5" height="4.5" fill="#c89060"/><rect x="94.5" y="90" width="4.5" height="4.5" fill="#c08048"/><rect x="0" y="94.5" width="4.5" height="4.5" fill="#b9743c"/><rect x="4.5" y="94.5" width="9" height="4.5" fill="#5c5c5c"/><rect x="13.5" y="94.5" width="9" height="4.5" fill="#707070"/><rect x="22.5" y="94.5" width="13.5" height="4.5" fill="#a6b870"/><rect x="36" y="94.5" width="4.5" height="4.5" fill="#8a9a48"/><rect x="40.5" y="94.5" width="9" height="4.5" fill="#c68e5c"/><rect x="49.5" y="94.5" width="13.5" height="4.5" fill="#c08048"/><rect x="63" y="94.5" width="13.5" height="4.5" fill="#c89060"/><rect x="76.5" y="94.5" width="4.5" height="4.5" fill="#c08048"/><rect x="81" y="94.5" width="4.5" height="4.5" fill="#c68e5c"/><rect x="85.5" y="94.5" width="13.5" height="4.5" fill="#c08048"/><rect x="0" y="99" width="4.5" height="4.5" fill="#b9743c"/><rect x="4.5" y="99" width="9" height="4.5" fill="#5c5c5c"/><rect x="13.5" y="99" width="9" height="4.5" fill="#707070"/><rect x="22.5" y="99" width="13.5" height="4.5" fill="#a6b870"/><rect x="36" y="99" width="4.5" height="4.5" fill="#8a9a48"/><rect x="40.5" y="99" width="9" height="4.5" fill="#c68e5c"/><rect x="49.5" y="99" width="9" height="4.5" fill="#c08048"/><rect x="58.5" y="99" width="4.5" height="4.5" fill="#8a4e1e"/><rect x="63" y="99" width="13.5" height="4.5" fill="#c89060"/><rect x="76.5" y="99" width="4.5" height="4.5" fill="#c08048"/><rect x="81" y="99" width="4.5" height="4.5" fill="#8a4e1e"/><rect x="85.5" y="99" width="4.5" height="4.5" fill="#c08048"/><rect x="90" y="99" width="4.5" height="4.5" fill="#8a9a58"/><rect x="0" y="103.5" width="4.5" height="4.5" fill="#b9743c"/><rect x="4.5" y="103.5" width="9" height="4.5" fill="#5c5c5c"/><rect x="13.5" y="103.5" width="9" height="4.5" fill="#707070"/><rect x="22.5" y="103.5" width="4.5" height="4.5" fill="#6c7d2c"/><rect x="27" y="103.5" width="9" height="4.5" fill="#a6b870"/><rect x="36" y="103.5" width="4.5" height="4.5" fill="#c98d58"/><rect x="40.5" y="103.5" width="4.5" height="4.5" fill="#c08048"/><rect x="45" y="103.5" width="4.5" height="4.5" fill="#c89060"/><rect x="49.5" y="103.5" width="4.5" height="4.5" fill="#c08048"/><rect x="54" y="103.5" width="4.5" height="4.5" fill="#c68e5c"/><rect x="58.5" y="103.5" width="4.5" height="4.5" fill="#c08048"/><rect x="63" y="103.5" width="4.5" height="4.5" fill="#c68e5c"/><rect x="67.5" y="103.5" width="4.5" height="4.5" fill="#6c7d2c"/><rect x="72" y="103.5" width="9" height="4.5" fill="#9a5a28"/><rect x="81" y="103.5" width="9" height="4.5" fill="#c08048"/><rect x="90" y="103.5" width="4.5" height="4.5" fill="#8a9a58"/><rect x="0" y="108" width="13.5" height="4.5" fill="#6c7d2c"/><rect x="13.5" y="108" width="13.5" height="4.5" fill="#707070"/><rect x="27" y="108" width="4.5" height="4.5" fill="#6c7d2c"/><rect x="31.5" y="108" width="9" height="4.5" fill="#c68e5c"/><rect x="40.5" y="108" width="18" height="4.5" fill="#c98d58"/><rect x="58.5" y="108" width="13.5" height="4.5" fill="#6c7d2c"/><rect x="72" y="108" width="18" height="4.5" fill="#9a5a28"/><rect x="0" y="112.5" width="13.5" height="4.5" fill="#6c7d2c"/><rect x="13.5" y="112.5" width="13.5" height="4.5" fill="#707070"/><rect x="27" y="112.5" width="4.5" height="4.5" fill="#6c7d2c"/><rect x="31.5" y="112.5" width="4.5" height="4.5" fill="#c68e5c"/><rect x="36" y="112.5" width="4.5" height="4.5" fill="#d9a273"/><rect x="40.5" y="112.5" width="18" height="4.5" fill="#c98d58"/><rect x="58.5" y="112.5" width="13.5" height="4.5" fill="#6c7d2c"/><rect x="72" y="112.5" width="13.5" height="4.5" fill="#9a5a28"/><rect x="85.5" y="112.5" width="4.5" height="4.5" fill="#8a4e1e"/><rect x="0" y="117" width="13.5" height="4.5" fill="#707070"/><rect x="13.5" y="117" width="9" height="4.5" fill="#3e3e3e"/><rect x="22.5" y="117" width="4.5" height="4.5" fill="#707070"/><rect x="27" y="117" width="4.5" height="4.5" fill="#a6b870"/><rect x="31.5" y="117" width="9" height="4.5" fill="#c98d58"/><rect x="40.5" y="117" width="13.5" height="4.5" fill="#c68e5c"/><rect x="54" y="117" width="4.5" height="4.5" fill="#c98d58"/><rect x="58.5" y="117" width="13.5" height="4.5" fill="#6c7d2c"/><rect x="72" y="117" width="18" height="4.5" fill="#9a5a28"/><rect x="0" y="121.5" width="9" height="4.5" fill="#8a9a48"/><rect x="9" y="121.5" width="13.5" height="4.5" fill="#3e3e3e"/><rect x="22.5" y="121.5" width="4.5" height="4.5" fill="#5c5c5c"/><rect x="27" y="121.5" width="9" height="4.5" fill="#6c7d2c"/><rect x="36" y="121.5" width="13.5" height="4.5" fill="#c68e5c"/><rect x="49.5" y="121.5" width="9" height="4.5" fill="#b9743c"/><rect x="58.5" y="121.5" width="9" height="4.5" fill="#c68e5c"/><rect x="67.5" y="121.5" width="22.5" height="4.5" fill="#b9743c"/><rect x="0" y="126" width="4.5" height="4.5" fill="#707070"/><rect x="4.5" y="126" width="4.5" height="4.5" fill="#8a9a48"/><rect x="9" y="126" width="18" height="4.5" fill="#3e3e3e"/><rect x="27" y="126" width="9" height="4.5" fill="#a6b870"/><rect x="36" y="126" width="4.5" height="4.5" fill="#c98d58"/><rect x="40.5" y="126" width="4.5" height="4.5" fill="#c68e5c"/><rect x="45" y="126" width="4.5" height="4.5" fill="#c98d58"/><rect x="49.5" y="126" width="31.5" height="4.5" fill="#b9743c"/><rect x="81" y="126" width="4.5" height="4.5" fill="#9a5a28"/><rect x="85.5" y="126" width="9" height="4.5" fill="#b9743c"/><rect x="0" y="130.5" width="9" height="4.5" fill="#8a9a48"/><rect x="9" y="130.5" width="4.5" height="4.5" fill="#a7a7a7"/><rect x="13.5" y="130.5" width="9" height="4.5" fill="#3e3e3e"/><rect x="22.5" y="130.5" width="4.5" height="4.5" fill="#5c5c5c"/><rect x="27" y="130.5" width="9" height="4.5" fill="#a6b870"/><rect x="36" y="130.5" width="4.5" height="4.5" fill="#3a4858"/><rect x="40.5" y="130.5" width="9" height="4.5" fill="#c68e5c"/><rect x="49.5" y="130.5" width="40.5" height="4.5" fill="#b9743c"/><rect x="90" y="130.5" width="4.5" height="4.5" fill="#d8a070"/><rect x="0" y="135" width="4.5" height="4.5" fill="#8a9a48"/><rect x="4.5" y="135" width="9" height="4.5" fill="#707070"/><rect x="13.5" y="135" width="9" height="4.5" fill="#3e3e3e"/><rect x="22.5" y="135" width="9" height="4.5" fill="#a6b870"/><rect x="31.5" y="135" width="18" height="4.5" fill="#c68e5c"/><rect x="49.5" y="135" width="18" height="4.5" fill="#b9743c"/><rect x="67.5" y="135" width="31.5" height="4.5" fill="#d8a070"/><rect x="0" y="139.5" width="13.5" height="4.5" fill="#707070"/><rect x="13.5" y="139.5" width="9" height="4.5" fill="#a7a7a7"/><rect x="22.5" y="139.5" width="9" height="4.5" fill="#a6b870"/><rect x="31.5" y="139.5" width="9" height="4.5" fill="#4a5a6a"/><rect x="40.5" y="139.5" width="4.5" height="4.5" fill="#3a4858"/><rect x="45" y="139.5" width="31.5" height="4.5" fill="#d8a070"/><rect x="76.5" y="139.5" width="4.5" height="4.5" fill="#9a5a28"/><rect x="81" y="139.5" width="18" height="4.5" fill="#d8a070"/><rect x="0" y="144" width="4.5" height="4.5" fill="#707070"/><rect x="4.5" y="144" width="4.5" height="4.5" fill="#5c5c5c"/><rect x="9" y="144" width="18" height="4.5" fill="#707070"/><rect x="27" y="144" width="4.5" height="4.5" fill="#a6b870"/><rect x="31.5" y="144" width="9" height="4.5" fill="#4a5a6a"/><rect x="40.5" y="144" width="4.5" height="4.5" fill="#d8a070"/><rect x="45" y="144" width="4.5" height="4.5" fill="#3a4858"/><rect x="49.5" y="144" width="4.5" height="4.5" fill="#9a5a28"/><rect x="54" y="144" width="9" height="4.5" fill="#c08050"/><rect x="63" y="144" width="22.5" height="4.5" fill="#d8a070"/><rect x="85.5" y="144" width="4.5" height="4.5" fill="#c08050"/><rect x="90" y="144" width="9" height="4.5" fill="#d8a070"/><rect x="0" y="148.5" width="4.5" height="4.5" fill="#707070"/><rect x="4.5" y="148.5" width="4.5" height="4.5" fill="#5c5c5c"/><rect x="9" y="148.5" width="13.5" height="4.5" fill="#707070"/><rect x="22.5" y="148.5" width="9" height="4.5" fill="#a6b870"/><rect x="31.5" y="148.5" width="4.5" height="4.5" fill="#4a5a6a"/><rect x="36" y="148.5" width="4.5" height="4.5" fill="#3a4858"/><rect x="40.5" y="148.5" width="22.5" height="4.5" fill="#d8a070"/><rect x="63" y="148.5" width="9" height="4.5" fill="#3a4858"/><rect x="72" y="148.5" width="18" height="4.5" fill="#d8a070"/><rect x="90" y="148.5" width="22.5" height="4.5" fill="#e6b68e"/><rect x="0" y="153" width="13.5" height="4.5" fill="#707070"/><rect x="13.5" y="153" width="18" height="4.5" fill="#8a9a48"/><rect x="31.5" y="153" width="18" height="4.5" fill="#e6b68e"/><rect x="49.5" y="153" width="13.5" height="4.5" fill="#d8a070"/><rect x="63" y="153" width="9" height="4.5" fill="#3a4858"/><rect x="72" y="153" width="40.5" height="4.5" fill="#e6b68e"/><rect x="0" y="157.5" width="13.5" height="4.5" fill="#707070"/><rect x="13.5" y="157.5" width="4.5" height="4.5" fill="#8a9a48"/><rect x="18" y="157.5" width="4.5" height="4.5" fill="#6c7d2c"/><rect x="22.5" y="157.5" width="4.5" height="4.5" fill="#a7a7a7"/><rect x="27" y="157.5" width="4.5" height="4.5" fill="#8a9a48"/><rect x="31.5" y="157.5" width="4.5" height="4.5" fill="#a8683a"/><rect x="36" y="157.5" width="4.5" height="4.5" fill="#e6b68e"/><rect x="40.5" y="157.5" width="9" height="4.5" fill="#a8683a"/><rect x="49.5" y="157.5" width="13.5" height="4.5" fill="#e6b68e"/><rect x="63" y="157.5" width="4.5" height="4.5" fill="#a8683a"/><rect x="67.5" y="157.5" width="49.5" height="4.5" fill="#e6b68e"/><rect x="0" y="162" width="13.5" height="4.5" fill="#8a9a48"/><rect x="13.5" y="162" width="22.5" height="4.5" fill="#a7a7a7"/><rect x="36" y="162" width="4.5" height="4.5" fill="#d8a070"/><rect x="40.5" y="162" width="13.5" height="4.5" fill="#e0a878"/><rect x="54" y="162" width="13.5" height="4.5" fill="#d8a070"/><rect x="67.5" y="162" width="27" height="4.5" fill="#e6b68e"/><rect x="94.5" y="162" width="4.5" height="4.5" fill="#d8b898"/><rect x="99" y="162" width="4.5" height="4.5" fill="#e6b68e"/><rect x="103.5" y="162" width="4.5" height="4.5" fill="#d8b898"/><rect x="108" y="162" width="4.5" height="4.5" fill="#e6b68e"/><rect x="0" y="166.5" width="13.5" height="4.5" fill="#8a9a48"/><rect x="13.5" y="166.5" width="13.5" height="4.5" fill="#a7a7a7"/><rect x="27" y="166.5" width="13.5" height="4.5" fill="#8a9a48"/><rect x="40.5" y="166.5" width="13.5" height="4.5" fill="#e0a878"/><rect x="54" y="166.5" width="13.5" height="4.5" fill="#d8a070"/><rect x="67.5" y="166.5" width="13.5" height="4.5" fill="#e6b68e"/><rect x="81" y="166.5" width="13.5" height="4.5" fill="#b8c890"/><rect x="94.5" y="166.5" width="13.5" height="4.5" fill="#e6b68e"/><rect x="108" y="166.5" width="4.5" height="4.5" fill="#cdc3a4"/><rect x="0" y="171" width="4.5" height="4.5" fill="#6c7d2c"/><rect x="4.5" y="171" width="9" height="4.5" fill="#a7a7a7"/><rect x="13.5" y="171" width="13.5" height="4.5" fill="#707070"/><rect x="27" y="171" width="13.5" height="4.5" fill="#8a9a48"/><rect x="40.5" y="171" width="9" height="4.5" fill="#d8a070"/><rect x="49.5" y="171" width="4.5" height="4.5" fill="#e6b68e"/><rect x="54" y="171" width="9" height="4.5" fill="#d8a070"/><rect x="63" y="171" width="18" height="4.5" fill="#e8b088"/><rect x="81" y="171" width="4.5" height="4.5" fill="#b8c890"/><rect x="85.5" y="171" width="4.5" height="4.5" fill="#a6b870"/><rect x="90" y="171" width="4.5" height="4.5" fill="#b8c890"/><rect x="94.5" y="171" width="9" height="4.5" fill="#d8b898"/><rect x="103.5" y="171" width="4.5" height="4.5" fill="#e6b68e"/><rect x="108" y="171" width="4.5" height="4.5" fill="#cdc3a4"/><rect x="0" y="175.5" width="22.5" height="4.5" fill="#a7a7a7"/><rect x="22.5" y="175.5" width="27" height="4.5" fill="#8a9a48"/><rect x="49.5" y="175.5" width="4.5" height="4.5" fill="#e8b088"/><rect x="54" y="175.5" width="4.5" height="4.5" fill="#d8a070"/><rect x="58.5" y="175.5" width="4.5" height="4.5" fill="#e8b088"/><rect x="63" y="175.5" width="4.5" height="4.5" fill="#d8a070"/><rect x="67.5" y="175.5" width="9" height="4.5" fill="#e8b088"/><rect x="76.5" y="175.5" width="13.5" height="4.5" fill="#e6b68e"/><rect x="90" y="175.5" width="4.5" height="4.5" fill="#a6b870"/><rect x="94.5" y="175.5" width="27" height="4.5" fill="#d8c8b0"/><rect x="0" y="180" width="22.5" height="4.5" fill="#a7a7a7"/><rect x="22.5" y="180" width="27" height="4.5" fill="#8a9a48"/><rect x="49.5" y="180" width="27" height="4.5" fill="#e8b088"/><rect x="76.5" y="180" width="4.5" height="4.5" fill="#d8a070"/><rect x="81" y="180" width="4.5" height="4.5" fill="#a6b870"/><rect x="85.5" y="180" width="4.5" height="4.5" fill="#e6b68e"/><rect x="90" y="180" width="4.5" height="4.5" fill="#a6b870"/><rect x="94.5" y="180" width="27" height="4.5" fill="#d8c8b0"/><rect x="0" y="184.5" width="9" height="4.5" fill="#a7a7a7"/><rect x="9" y="184.5" width="9" height="4.5" fill="#8a9a48"/><rect x="18" y="184.5" width="4.5" height="4.5" fill="#a7a7a7"/><rect x="22.5" y="184.5" width="9" height="4.5" fill="#8a9a48"/><rect x="31.5" y="184.5" width="4.5" height="4.5" fill="#a6b870"/><rect x="36" y="184.5" width="4.5" height="4.5" fill="#8a9a48"/><rect x="40.5" y="184.5" width="13.5" height="4.5" fill="#a6b870"/><rect x="54" y="184.5" width="9" height="4.5" fill="#e8b088"/><rect x="63" y="184.5" width="4.5" height="4.5" fill="#a6b870"/><rect x="67.5" y="184.5" width="9" height="4.5" fill="#d8a070"/><rect x="76.5" y="184.5" width="4.5" height="4.5" fill="#a6b870"/><rect x="81" y="184.5" width="9" height="4.5" fill="#e6b68e"/><rect x="90" y="184.5" width="4.5" height="4.5" fill="#a6b870"/><rect x="94.5" y="184.5" width="4.5" height="4.5" fill="#b8c890"/><rect x="99" y="184.5" width="4.5" height="4.5" fill="#cdc3a4"/><rect x="103.5" y="184.5" width="4.5" height="4.5" fill="#a6b870"/><rect x="108" y="184.5" width="9" height="4.5" fill="#d8c8b0"/><rect x="117" y="184.5" width="4.5" height="4.5" fill="#c0b898"/><rect x="0" y="189" width="9" height="4.5" fill="#a6b870"/><rect x="9" y="189" width="31.5" height="4.5" fill="#8a9a48"/><rect x="40.5" y="189" width="13.5" height="4.5" fill="#6c7d2c"/><rect x="54" y="189" width="4.5" height="4.5" fill="#8a9a48"/><rect x="58.5" y="189" width="9" height="4.5" fill="#a6b870"/><rect x="67.5" y="189" width="13.5" height="4.5" fill="#8a9a48"/><rect x="81" y="189" width="13.5" height="4.5" fill="#b8c890"/><rect x="94.5" y="189" width="4.5" height="4.5" fill="#a6b870"/><rect x="99" y="189" width="4.5" height="4.5" fill="#b8c890"/><rect x="103.5" y="189" width="9" height="4.5" fill="#cdc3a4"/><rect x="112.5" y="189" width="4.5" height="4.5" fill="#c0b898"/><rect x="117" y="189" width="4.5" height="4.5" fill="#cdc3a4"/><rect x="0" y="193.5" width="9" height="4.5" fill="#a6b870"/><rect x="9" y="193.5" width="31.5" height="4.5" fill="#8a9a48"/><rect x="40.5" y="193.5" width="9" height="4.5" fill="#6c7d2c"/><rect x="49.5" y="193.5" width="4.5" height="4.5" fill="#8a9a48"/><rect x="54" y="193.5" width="13.5" height="4.5" fill="#a6b870"/><rect x="67.5" y="193.5" width="4.5" height="4.5" fill="#8a9a48"/><rect x="72" y="193.5" width="4.5" height="4.5" fill="#a6b870"/><rect x="76.5" y="193.5" width="4.5" height="4.5" fill="#8a9a48"/><rect x="81" y="193.5" width="13.5" height="4.5" fill="#b8c890"/><rect x="94.5" y="193.5" width="9" height="4.5" fill="#a6b870"/><rect x="103.5" y="193.5" width="4.5" height="4.5" fill="#c0b898"/><rect x="108" y="193.5" width="13.5" height="4.5" fill="#b0946a"/><rect x="0" y="198" width="13.5" height="4.5" fill="#a7a7a7"/><rect x="13.5" y="198" width="4.5" height="4.5" fill="#b0b0b0"/><rect x="18" y="198" width="9" height="4.5" fill="#a7a7a7"/><rect x="27" y="198" width="22.5" height="4.5" fill="#8a9a48"/><rect x="49.5" y="198" width="31.5" height="4.5" fill="#a6b870"/><rect x="81" y="198" width="13.5" height="4.5" fill="#b8c890"/><rect x="94.5" y="198" width="13.5" height="4.5" fill="#a88c62"/><rect x="108" y="198" width="13.5" height="4.5" fill="#b0946a"/><rect x="0" y="202.5" width="9" height="4.5" fill="#b0b0b0"/><rect x="9" y="202.5" width="18" height="4.5" fill="#a7a7a7"/><rect x="27" y="202.5" width="22.5" height="4.5" fill="#a6b870"/><rect x="49.5" y="202.5" width="4.5" height="4.5" fill="#8a9a48"/><rect x="54" y="202.5" width="9" height="4.5" fill="#a6b870"/><rect x="63" y="202.5" width="13.5" height="4.5" fill="#e0956a"/><rect x="76.5" y="202.5" width="4.5" height="4.5" fill="#c08a60"/><rect x="81" y="202.5" width="4.5" height="4.5" fill="#d8a070"/><rect x="85.5" y="202.5" width="4.5" height="4.5" fill="#c08a60"/><rect x="90" y="202.5" width="4.5" height="4.5" fill="#d8a070"/><rect x="94.5" y="202.5" width="9" height="4.5" fill="#a88c62"/><rect x="103.5" y="202.5" width="13.5" height="4.5" fill="#b0946a"/><rect x="0" y="207" width="9" height="4.5" fill="#b0b0b0"/><rect x="9" y="207" width="18" height="4.5" fill="#a7a7a7"/><rect x="27" y="207" width="4.5" height="4.5" fill="#8a9a48"/><rect x="31.5" y="207" width="27" height="4.5" fill="#a6b870"/><rect x="58.5" y="207" width="18" height="4.5" fill="#e0956a"/><rect x="76.5" y="207" width="4.5" height="4.5" fill="#c08a60"/><rect x="81" y="207" width="4.5" height="4.5" fill="#d8a070"/><rect x="85.5" y="207" width="4.5" height="4.5" fill="#c08a60"/><rect x="90" y="207" width="4.5" height="4.5" fill="#d8a070"/><rect x="94.5" y="207" width="9" height="4.5" fill="#a88c62"/><rect x="103.5" y="207" width="9" height="4.5" fill="#b0946a"/><rect x="0" y="211.5" width="9" height="4.5" fill="#b0b0b0"/><rect x="9" y="211.5" width="4.5" height="4.5" fill="#a7a7a7"/><rect x="13.5" y="211.5" width="13.5" height="4.5" fill="#b0b0b0"/><rect x="27" y="211.5" width="31.5" height="4.5" fill="#a6b870"/><rect x="58.5" y="211.5" width="18" height="4.5" fill="#e0956a"/><rect x="76.5" y="211.5" width="4.5" height="4.5" fill="#a6b870"/><rect x="81" y="211.5" width="9" height="4.5" fill="#c08a60"/><rect x="90" y="211.5" width="4.5" height="4.5" fill="#b0946a"/><rect x="94.5" y="211.5" width="4.5" height="4.5" fill="#d8a070"/><rect x="99" y="211.5" width="9" height="4.5" fill="#b0946a"/><rect x="0" y="216" width="4.5" height="4.5" fill="#5c5c5c"/><rect x="4.5" y="216" width="4.5" height="4.5" fill="#707070"/><rect x="9" y="216" width="4.5" height="4.5" fill="#a2a2a2"/><rect x="13.5" y="216" width="13.5" height="4.5" fill="#b0b0b0"/><rect x="27" y="216" width="13.5" height="4.5" fill="#a2a2a2"/><rect x="40.5" y="216" width="18" height="4.5" fill="#a6b870"/><rect x="58.5" y="216" width="9" height="4.5" fill="#e0956a"/><rect x="67.5" y="216" width="13.5" height="4.5" fill="#a7a7a7"/><rect x="81" y="216" width="4.5" height="4.5" fill="#b0b0b0"/><rect x="85.5" y="216" width="9" height="4.5" fill="#c08a60"/><rect x="94.5" y="216" width="4.5" height="4.5" fill="#8a9a48"/><rect x="99" y="216" width="4.5" height="4.5" fill="#9a8058"/><rect x="0" y="220.5" width="9" height="4.5" fill="#5c5c5c"/><rect x="9" y="220.5" width="31.5" height="4.5" fill="#a2a2a2"/><rect x="40.5" y="220.5" width="40.5" height="4.5" fill="#a7a7a7"/><rect x="81" y="220.5" width="4.5" height="4.5" fill="#b0b0b0"/><rect x="85.5" y="220.5" width="9" height="4.5" fill="#c08a60"/><rect x="94.5" y="220.5" width="4.5" height="4.5" fill="#8a9a48"/><rect x="99" y="220.5" width="4.5" height="4.5" fill="#9a8058"/><rect x="0" y="225" width="9" height="4.5" fill="#5c5c5c"/><rect x="9" y="225" width="4.5" height="4.5" fill="#a2a2a2"/><rect x="13.5" y="225" width="9" height="4.5" fill="#a7a7a7"/><rect x="22.5" y="225" width="4.5" height="4.5" fill="#c8c8c8"/><rect x="27" y="225" width="13.5" height="4.5" fill="#a2a2a2"/><rect x="40.5" y="225" width="4.5" height="4.5" fill="#a7a7a7"/><rect x="45" y="225" width="9" height="4.5" fill="#a2a2a2"/><rect x="54" y="225" width="27" height="4.5" fill="#a7a7a7"/><rect x="81" y="225" width="4.5" height="4.5" fill="#b0b0b0"/><rect x="85.5" y="225" width="9" height="4.5" fill="#c08a60"/><rect x="94.5" y="225" width="4.5" height="4.5" fill="#9a8a50"/><rect x="99" y="225" width="4.5" height="4.5" fill="#b0946a"/><rect x="0" y="229.5" width="4.5" height="4.5" fill="#3e3e3e"/><rect x="4.5" y="229.5" width="4.5" height="4.5" fill="#9c9c9c"/><rect x="9" y="229.5" width="18" height="4.5" fill="#a7a7a7"/><rect x="27" y="229.5" width="9" height="4.5" fill="#c8c8c8"/><rect x="36" y="229.5" width="13.5" height="4.5" fill="#c2c2c2"/><rect x="49.5" y="229.5" width="27" height="4.5" fill="#a7a7a7"/><rect x="76.5" y="229.5" width="13.5" height="4.5" fill="#c8c8c8"/><rect x="90" y="229.5" width="4.5" height="4.5" fill="#7a8a4a"/><rect x="94.5" y="229.5" width="4.5" height="4.5" fill="#a7a7a7"/><rect x="99" y="229.5" width="4.5" height="4.5" fill="#7a8a4a"/><rect x="103.5" y="229.5" width="4.5" height="4.5" fill="#b0946a"/><rect x="0" y="234" width="4.5" height="4.5" fill="#3e3e3e"/><rect x="4.5" y="234" width="4.5" height="4.5" fill="#9c9c9c"/><rect x="9" y="234" width="18" height="4.5" fill="#a7a7a7"/><rect x="27" y="234" width="9" height="4.5" fill="#c8c8c8"/><rect x="36" y="234" width="13.5" height="4.5" fill="#c2c2c2"/><rect x="49.5" y="234" width="13.5" height="4.5" fill="#a7a7a7"/><rect x="63" y="234" width="4.5" height="4.5" fill="#cccccc"/><rect x="67.5" y="234" width="22.5" height="4.5" fill="#c8c8c8"/><rect x="90" y="234" width="13.5" height="4.5" fill="#7a8a4a"/><rect x="103.5" y="234" width="4.5" height="4.5" fill="#9a8058"/><rect x="0" y="238.5" width="4.5" height="4.5" fill="#3e3e3e"/><rect x="4.5" y="238.5" width="4.5" height="4.5" fill="#9c9c9c"/><rect x="9" y="238.5" width="4.5" height="4.5" fill="#a7a7a7"/><rect x="13.5" y="238.5" width="9" height="4.5" fill="#9c9c9c"/><rect x="22.5" y="238.5" width="4.5" height="4.5" fill="#a7a7a7"/><rect x="27" y="238.5" width="9" height="4.5" fill="#c8c8c8"/><rect x="36" y="238.5" width="4.5" height="4.5" fill="#c2c2c2"/><rect x="40.5" y="238.5" width="4.5" height="4.5" fill="#c8c8c8"/><rect x="45" y="238.5" width="9" height="4.5" fill="#a7a7a7"/><rect x="54" y="238.5" width="9" height="4.5" fill="#acacac"/><rect x="63" y="238.5" width="13.5" height="4.5" fill="#c8c8c8"/><rect x="76.5" y="238.5" width="4.5" height="4.5" fill="#a7a7a7"/><rect x="81" y="238.5" width="9" height="4.5" fill="#c8c8c8"/><rect x="90" y="238.5" width="9" height="4.5" fill="#7a8a4a"/><rect x="99" y="238.5" width="4.5" height="4.5" fill="#a7a7a7"/><rect x="103.5" y="238.5" width="4.5" height="4.5" fill="#7a8a4a"/><rect x="0" y="243" width="9" height="4.5" fill="#222222"/><rect x="9" y="243" width="18" height="4.5" fill="#707070"/><rect x="27" y="243" width="13.5" height="4.5" fill="#8a8a8a"/><rect x="40.5" y="243" width="4.5" height="4.5" fill="#c2c2c2"/><rect x="45" y="243" width="9" height="4.5" fill="#a7a7a7"/><rect x="54" y="243" width="13.5" height="4.5" fill="#acacac"/><rect x="67.5" y="243" width="13.5" height="4.5" fill="#c8c8c8"/><rect x="81" y="243" width="9" height="4.5" fill="#a7a7a7"/><rect x="90" y="243" width="4.5" height="4.5" fill="#8a9a5a"/><rect x="94.5" y="243" width="9" height="4.5" fill="#a7a7a7"/><rect x="103.5" y="243" width="4.5" height="4.5" fill="#8a7050"/><rect x="0" y="247.5" width="9" height="4.5" fill="#222222"/><rect x="9" y="247.5" width="18" height="4.5" fill="#707070"/><rect x="27" y="247.5" width="13.5" height="4.5" fill="#8a8a8a"/><rect x="40.5" y="247.5" width="4.5" height="4.5" fill="#a7a7a7"/><rect x="45" y="247.5" width="4.5" height="4.5" fill="#acacac"/><rect x="49.5" y="247.5" width="4.5" height="4.5" fill="#a7a7a7"/><rect x="54" y="247.5" width="4.5" height="4.5" fill="#acacac"/><rect x="58.5" y="247.5" width="4.5" height="4.5" fill="#a7a7a7"/><rect x="63" y="247.5" width="4.5" height="4.5" fill="#acacac"/><rect x="67.5" y="247.5" width="13.5" height="4.5" fill="#c8c8c8"/><rect x="81" y="247.5" width="9" height="4.5" fill="#a7a7a7"/><rect x="90" y="247.5" width="4.5" height="4.5" fill="#8a9a5a"/><rect x="94.5" y="247.5" width="9" height="4.5" fill="#a7a7a7"/><rect x="103.5" y="247.5" width="4.5" height="4.5" fill="#8a7050"/><rect x="0" y="252" width="4.5" height="4.5" fill="#3e3e3e"/><rect x="4.5" y="252" width="4.5" height="4.5" fill="#222222"/><rect x="9" y="252" width="31.5" height="4.5" fill="#8a8a8a"/><rect x="40.5" y="252" width="13.5" height="4.5" fill="#a7a7a7"/><rect x="54" y="252" width="13.5" height="4.5" fill="#acacac"/><rect x="67.5" y="252" width="22.5" height="4.5" fill="#a7a7a7"/><rect x="90" y="252" width="4.5" height="4.5" fill="#8a9a5a"/><rect x="94.5" y="252" width="13.5" height="4.5" fill="#a7a7a7"/><rect x="108" y="252" width="4.5" height="4.5" fill="#8a7050"/><rect x="0" y="256.5" width="9" height="4.5" fill="#a0a0a0"/><rect x="9" y="256.5" width="13.5" height="4.5" fill="#a7a7a7"/><rect x="22.5" y="256.5" width="13.5" height="4.5" fill="#8a8a8a"/><rect x="36" y="256.5" width="22.5" height="4.5" fill="#a7a7a7"/><rect x="58.5" y="256.5" width="9" height="4.5" fill="#acacac"/><rect x="67.5" y="256.5" width="9" height="4.5" fill="#a7a7a7"/><rect x="76.5" y="256.5" width="4.5" height="4.5" fill="#c8c8c8"/><rect x="81" y="256.5" width="9" height="4.5" fill="#a7a7a7"/><rect x="90" y="256.5" width="13.5" height="4.5" fill="#c8c8c8"/><rect x="103.5" y="256.5" width="4.5" height="4.5" fill="#a7a7a7"/><rect x="108" y="256.5" width="4.5" height="4.5" fill="#8a7050"/><rect x="0" y="261" width="4.5" height="4.5" fill="#a0a0a0"/><rect x="4.5" y="261" width="4.5" height="4.5" fill="#a7a7a7"/><rect x="9" y="261" width="4.5" height="4.5" fill="#a0a0a0"/><rect x="13.5" y="261" width="45" height="4.5" fill="#a7a7a7"/><rect x="58.5" y="261" width="13.5" height="4.5" fill="#acacac"/><rect x="72" y="261" width="18" height="4.5" fill="#a7a7a7"/><rect x="90" y="261" width="13.5" height="4.5" fill="#c8c8c8"/><rect x="103.5" y="261" width="9" height="4.5" fill="#2c3844"/><rect x="0" y="265.5" width="9" height="4.5" fill="#a0a0a0"/><rect x="9" y="265.5" width="18" height="4.5" fill="#a7a7a7"/><rect x="27" y="265.5" width="4.5" height="4.5" fill="#a0a0a0"/><rect x="31.5" y="265.5" width="9" height="4.5" fill="#a7a7a7"/><rect x="40.5" y="265.5" width="4.5" height="4.5" fill="#acacac"/><rect x="45" y="265.5" width="9" height="4.5" fill="#a7a7a7"/><rect x="54" y="265.5" width="4.5" height="4.5" fill="#acacac"/><rect x="58.5" y="265.5" width="4.5" height="4.5" fill="#a7a7a7"/><rect x="63" y="265.5" width="22.5" height="4.5" fill="#acacac"/><rect x="85.5" y="265.5" width="4.5" height="4.5" fill="#bcbcbc"/><rect x="90" y="265.5" width="4.5" height="4.5" fill="#c8c8c8"/><rect x="94.5" y="265.5" width="9" height="4.5" fill="#bcbcbc"/><rect x="103.5" y="265.5" width="4.5" height="4.5" fill="#7a6448"/><rect x="108" y="265.5" width="4.5" height="4.5" fill="#2c3844"/><rect x="0" y="270" width="9" height="4.5" fill="#e2e2e2"/><rect x="9" y="270" width="9" height="4.5" fill="#a7a7a7"/><rect x="18" y="270" width="4.5" height="4.5" fill="#a0a0a0"/><rect x="22.5" y="270" width="13.5" height="4.5" fill="#a7a7a7"/><rect x="36" y="270" width="9" height="4.5" fill="#acacac"/><rect x="45" y="270" width="9" height="4.5" fill="#a7a7a7"/><rect x="54" y="270" width="22.5" height="4.5" fill="#acacac"/><rect x="76.5" y="270" width="4.5" height="4.5" fill="#a7a7a7"/><rect x="81" y="270" width="4.5" height="4.5" fill="#acacac"/><rect x="85.5" y="270" width="22.5" height="4.5" fill="#bcbcbc"/><rect x="108" y="270" width="4.5" height="4.5" fill="#7a6448"/><rect x="0" y="274.5" width="13.5" height="4.5" fill="#c8c8c8"/><rect x="13.5" y="274.5" width="40.5" height="4.5" fill="#a7a7a7"/><rect x="54" y="274.5" width="27" height="4.5" fill="#acacac"/><rect x="81" y="274.5" width="4.5" height="4.5" fill="#a7a7a7"/><rect x="85.5" y="274.5" width="4.5" height="4.5" fill="#acacac"/><rect x="90" y="274.5" width="4.5" height="4.5" fill="#bcbcbc"/><rect x="94.5" y="274.5" width="4.5" height="4.5" fill="#c8c8c8"/><rect x="99" y="274.5" width="9" height="4.5" fill="#bcbcbc"/><rect x="108" y="274.5" width="4.5" height="4.5" fill="#7a6448"/><rect x="0" y="279" width="13.5" height="4.5" fill="#c8c8c8"/><rect x="13.5" y="279" width="4.5" height="4.5" fill="#acacac"/><rect x="18" y="279" width="4.5" height="4.5" fill="#a7a7a7"/><rect x="22.5" y="279" width="4.5" height="4.5" fill="#acacac"/><rect x="27" y="279" width="4.5" height="4.5" fill="#a7a7a7"/><rect x="31.5" y="279" width="4.5" height="4.5" fill="#acacac"/><rect x="36" y="279" width="4.5" height="4.5" fill="#a7a7a7"/><rect x="40.5" y="279" width="4.5" height="4.5" fill="#acacac"/><rect x="45" y="279" width="4.5" height="4.5" fill="#a7a7a7"/><rect x="49.5" y="279" width="18" height="4.5" fill="#acacac"/><rect x="67.5" y="279" width="13.5" height="4.5" fill="#a7a7a7"/><rect x="81" y="279" width="9" height="4.5" fill="#acacac"/><rect x="90" y="279" width="4.5" height="4.5" fill="#bcbcbc"/><rect x="94.5" y="279" width="13.5" height="4.5" fill="#c8c8c8"/><rect x="108" y="279" width="4.5" height="4.5" fill="#9a8058"/><rect x="0" y="283.5" width="13.5" height="4.5" fill="#e2e2e2"/><rect x="13.5" y="283.5" width="9" height="4.5" fill="#acacac"/><rect x="22.5" y="283.5" width="13.5" height="4.5" fill="#a7a7a7"/><rect x="36" y="283.5" width="13.5" height="4.5" fill="#acacac"/><rect x="49.5" y="283.5" width="27" height="4.5" fill="#a7a7a7"/><rect x="76.5" y="283.5" width="4.5" height="4.5" fill="#acacac"/><rect x="81" y="283.5" width="4.5" height="4.5" fill="#a7a7a7"/><rect x="85.5" y="283.5" width="22.5" height="4.5" fill="#c8c8c8"/><rect x="0" y="288" width="13.5" height="1" fill="#e2e2e2"/><rect x="13.5" y="288" width="9" height="1" fill="#acacac"/><rect x="22.5" y="288" width="18" height="1" fill="#a7a7a7"/><rect x="40.5" y="288" width="9" height="1" fill="#acacac"/><rect x="49.5" y="288" width="4.5" height="1" fill="#a7a7a7"/><rect x="54" y="288" width="4.5" height="1" fill="#acacac"/><rect x="58.5" y="288" width="27" height="1" fill="#a7a7a7"/><rect x="85.5" y="288" width="22.5" height="1" fill="#c8c8c8"/><rect x="67.5" y="63" width="13.5" height="4.5" fill="#a23a86"/><rect x="72" y="67.5" width="9" height="2" fill="#8c2f70"/></g><g filter="url(#b1)"><ellipse cx="98.5" cy="114.5" rx="13.7" ry="11.2" fill="#1d180f"/><ellipse cx="98.5" cy="114.5" rx="11.5" ry="9" fill="#8f9c5c"/><ellipse cx="98.5" cy="115.5" rx="8.5" ry="6" fill="#a3ad74"/><ellipse cx="97.5" cy="113.5" rx="2.2" ry="6.5" fill="#0c0c08"/><ellipse cx="162" cy="123.5" rx="13.7" ry="11.7" fill="#1d180f"/><ellipse cx="162" cy="123.5" rx="11.5" ry="9.5" fill="#8f9c5c"/><ellipse cx="162" cy="124.5" rx="8.5" ry="6.5" fill="#a3ad74"/><ellipse cx="161" cy="122.5" rx="2.2" ry="7.0" fill="#0c0c08"/></g></svg>
<div class="a" style="left:730px;top:68px;width:1134px;height:881px;background:#323334;border-left:1px solid #4b4d4f;border-top:1px solid #4b4d4f"></div>
<svg style="left:739px;top:77px" width="16" height="16" viewBox="0 0 16 16"><rect width="16" height="16" fill="#5c50ff"/><path d="M8.2 2.3 5.4 6.4 8.4 7.2 10.6 9.8 8 13.7" fill="none" stroke="#fff" stroke-width="1.7" stroke-linejoin="round"/></svg>
<div class="a" style="left:1138px;top:130.5px;width:114px;height:2.5px;background:#e0632a"></div>
<div class="ln" style="left:731px;top:133px;width:1133px;height:1px"></div>
<div class="a" style="left:735px;top:138px;width:53px;height:35px;background:#3e3f40;border-radius:6px 6px 5px 5px;overflow:hidden"><div class="a" style="left:1px;right:1px;bottom:0;height:2.5px;background:#e0632a;border-radius:0 0 4px 4px"></div></div>
<svg style="left:764px;top:149px" width="14" height="14" viewBox="0 0 14 14"><path d="M1.3 1 12.3 12M12.3 1 1.3 12" stroke="#d2d2d2" stroke-width="1.7" fill="none"/></svg>
<svg style="left:799px;top:146px" width="19" height="19" viewBox="0 0 19 19"><path d="M9.4 0.5V18.5M0.4 9.5H18.4" stroke="#d2d2d2" stroke-width="2.1" fill="none"/></svg>
<div class="ln" style="left:731px;top:175px;width:1133px;height:1px"></div>
<div class="btn" style="left:741px;top:186px;width:80px;height:33px;background:#d86431;border-radius:4.5px"></div>
<div class="btn" style="left:826px;top:186px;width:33px;height:33px;background:#2c2d2e;border:1px solid #5c5e60"></div>
<svg style="left:829.8px;top:189.8px" width="25.2" height="25.2" viewBox="0 0 100 100"><path d="M39.7 16.6 L40.9 4.9 L59.1 4.9 L60.3 16.6 L66.3 19.0 L75.4 11.7 L88.3 24.6 L81.0 33.7 L83.4 39.7 L95.1 40.9 L95.1 59.1 L83.4 60.3 L81.0 66.3 L88.3 75.4 L75.4 88.3 L66.3 81.0 L60.3 83.4 L59.1 95.1 L40.9 95.1 L39.7 83.4 L33.7 81.0 L24.6 88.3 L11.7 75.4 L19.0 66.3 L16.6 60.3 L4.9 59.1 L4.9 40.9 L16.6 39.7 L19.0 33.7 L11.7 24.6 L24.6 11.7 L33.7 19.0Z" fill="none" stroke="#d0d0d0" stroke-width="8.7" stroke-linejoin="round"/><circle cx="50" cy="50" r="15.5" fill="none" stroke="#d0d0d0" stroke-width="8.7"/></svg>
<div class="btn" style="left:864px;top:186px;width:90px;height:33px;background:#434647;border:1px solid #5c5e60"></div>
<div class="btn" style="left:959px;top:186px;width:62px;height:33px;background:#434647;border:1px solid #5c5e60"></div>
<div class="a" style="left:997px;top:187px;width:1px;height:31px;background:#5c5e60"></div>
<div class="btn" style="left:1026px;top:186px;width:62px;height:33px;background:#434647;border:1px solid #5c5e60"></div>
<div class="a" style="left:1064px;top:187px;width:1px;height:31px;background:#5c5e60"></div>
<svg style="left:959px;top:186px" width="62" height="33" viewBox="0 0 62 33"><path d="M24 8.5 15 16.5 24 24.5" stroke="#8a8d8f" stroke-width="1.8" fill="none"/><path d="M45.5 14 50 18.5 54.5 14" stroke="#8a8d8f" stroke-width="1.4" fill="none"/></svg>
<svg style="left:1026px;top:186px" width="62" height="33" viewBox="0 0 62 33"><path d="M15 8.5 24 16.5 15 24.5" stroke="#8a8d8f" stroke-width="1.8" fill="none"/><path d="M45.5 14 50 18.5 54.5 14" stroke="#8a8d8f" stroke-width="1.4" fill="none"/></svg>
<div class="a" style="left:1096px;top:192.5px;width:1px;height:19.5px;background:#5c5e60"></div>
<div class="btn" style="left:1105px;top:186px;width:123px;height:33px;background:#4b41ad;border-radius:5px"></div>
<svg style="left:1116.5px;top:191.5px" width="22" height="22" viewBox="0 0 22 22"><path d="M5.5 1.5Q6.654999999999999 5.845000000000001 11.0 7Q6.654999999999999 8.155 5.5 12.5Q4.345000000000001 8.155 0.0 7Q4.345000000000001 5.845000000000001 5.5 1.5ZM16.5 0.5999999999999996Q17.424 4.0760000000000005 20.9 5Q17.424 5.9239999999999995 16.5 9.4Q15.576 5.9239999999999995 12.1 5Q15.576 4.0760000000000005 16.5 0.5999999999999996ZM12.5 8.2Q13.928 13.572 19.3 15Q13.928 16.428 12.5 21.8Q11.072 16.428 5.7 15Q11.072 13.572 12.5 8.2Z" fill="#fff"/></svg>
<div class="ln" style="left:731px;top:228px;width:1133px;height:1px"></div>
<div class="a" style="left:731px;top:229px;width:1110px;height:666px;background:#2b2b2b"></div>
<div class="ln" style="left:1285px;top:229px;width:1px;height:666px"></div>
<div class="ln" style="left:1840.5px;top:229px;width:1px;height:666px"></div>
<div class="a" style="left:1841.5px;top:567px;width:23px;height:328px;background:#2b2b2b"></div>
<div class="ln" style="left:1841.5px;top:279px;width:23px;height:1px"></div>
<div class="ln" style="left:1841.5px;top:327px;width:23px;height:1px"></div>
<div class="ln" style="left:1841.5px;top:375px;width:23px;height:1px"></div>
<div class="ln" style="left:1841.5px;top:423px;width:23px;height:1px"></div>
<div class="ln" style="left:1841.5px;top:471px;width:23px;height:1px"></div>
<div class="ln" style="left:1841.5px;top:519px;width:23px;height:1px"></div>
<div class="ln" style="left:1841.5px;top:567px;width:23px;height:1px"></div>
<div class="a" style="left:731px;top:325.5px;width:85px;height:2.5px;background:#e0632a"></div>
<div class="ln" style="left:731px;top:328px;width:554px;height:1px"></div>
<div class="a" style="left:1286px;top:324.5px;width:85px;height:2.5px;background:#e0632a"></div>
<div class="ln" style="left:1286px;top:327px;width:554px;height:1px"></div>
<svg style="left:1142px;top:298px" width="24" height="24" viewBox="0 0 24 24" fill="none" stroke="#c4c4c4" stroke-width="1.7" stroke-linecap="round"><path d="M1.6 12.2C4 7.4 8 5 12 5s8 2.4 10.4 7.2C20 17 16 19.4 12 19.4S4 17 1.6 12.2Z"/><circle cx="10.6" cy="12.4" r="2.6"/><path d="M1.5 0.8 22.3 22.8"/></svg>
<div class="a" style="left:1177px;top:297px;width:26px;height:26px;border-radius:4.5px;background:#2866a2"></div><svg style="left:1177px;top:297px" width="26" height="26" viewBox="0 0 26 26" fill="none" stroke="#fff" stroke-width="1.8" stroke-linecap="round"><path d="M5.6 7.4H20"/><path d="M5.6 13H17.6a3 3 0 0 1 0 6H15"/><path d="M5.6 18.8H10"/><path d="M16.6 16.6 13.4 19l3.2 2.4z" fill="#fff" stroke-width="1" stroke-linejoin="round"/></svg>
<svg style="left:1218px;top:300px" width="18" height="20" viewBox="0 0 18 20" fill="none" stroke="#c4c4c4" stroke-width="1.8"><path d="M1 3 4.6 17.2"/><path d="M8.2 16.6V7.2M8.2 10.4C9 8 15 6.4 15 11V16.6"/></svg>
<svg style="left:1255px;top:304px" width="15" height="14" viewBox="0 0 15 14" stroke="#c4c4c4" stroke-width="1.6" fill="none"><path d="M0 1H14.6M0 6.8H14.6M0 12.6H14.6"/></svg>
<svg style="left:1697px;top:297px" width="24" height="24" viewBox="0 0 24 24" fill="none" stroke="#c4c4c4" stroke-width="1.7" stroke-linecap="round"><path d="M1.6 12.2C4 7.4 8 5 12 5s8 2.4 10.4 7.2C20 17 16 19.4 12 19.4S4 17 1.6 12.2Z"/><circle cx="10.6" cy="12.4" r="2.6"/><path d="M1.5 0.8 22.3 22.8"/></svg>
<div class="a" style="left:1732px;top:296px;width:26px;height:26px;border-radius:4.5px;background:#2866a2"></div><svg style="left:1732px;top:296px" width="26" height="26" viewBox="0 0 26 26" fill="none" stroke="#fff" stroke-width="1.8" stroke-linecap="round"><path d="M5.6 7.4H20"/><path d="M5.6 13H17.6a3 3 0 0 1 0 6H15"/><path d="M5.6 18.8H10"/><path d="M16.6 16.6 13.4 19l3.2 2.4z" fill="#fff" stroke-width="1" stroke-linejoin="round"/></svg>
<svg style="left:1773px;top:299px" width="18" height="20" viewBox="0 0 18 20" fill="none" stroke="#c4c4c4" stroke-width="1.8"><path d="M1 3 4.6 17.2"/><path d="M8.2 16.6V7.2M8.2 10.4C9 8 15 6.4 15 11V16.6"/></svg>
<svg style="left:1810px;top:303px" width="15" height="14" viewBox="0 0 15 14" stroke="#c4c4c4" stroke-width="1.6" fill="none"><path d="M0 1H14.6M0 6.8H14.6M0 12.6H14.6"/></svg>
<div class="a" style="left:1734px;top:234px;width:96px;height:26px;border-radius:5px;background:#47484a;overflow:hidden"><div class="a" style="left:0;top:0;width:31px;height:26px;background:#2866a2"></div><div class="a" style="left:31px;top:0;width:1px;height:26px;background:#3b3c3e"></div><div class="a" style="left:63.5px;top:0;width:1px;height:26px;background:#3b3c3e"></div><div class="a" style="left:9px;top:7px;width:5.5px;height:12px;background:#fff"></div><div class="a" style="left:17.5px;top:7px;width:5.5px;height:12px;background:#fff"></div><div class="a" style="left:41px;top:7px;width:14px;height:4.5px;background:#c9c9c9"></div><div class="a" style="left:41px;top:14px;width:14px;height:4.5px;background:#c9c9c9"></div><div class="a" style="left:73px;top:7px;width:14.5px;height:11.5px;background:#c9c9c9"></div></div>
<div class="ln" style="left:752px;top:329px;width:1px;height:511px"></div>
<div class="ln" style="left:1307px;top:328px;width:1px;height:512px"></div>
<div class="a" style="left:753px;top:331px;width:522px;height:14px;background:#353a3e"></div>
<div class="a" style="left:1308px;top:330px;width:522px;height:14px;background:#353a3e"></div>
<div class="a" style="left:1832.5px;top:330px;width:5.5px;height:54px;background:#4a4b4d;border-radius:3px"></div>
<div class="no" style="left:727.6px;top:331px"><div>1</div><div>2</div><div>3</div><div>4</div><div>5</div><div>6</div><div>7</div><div>8</div><div>9</div><div></div><div>10</div><div></div><div></div><div>11</div><div>12</div><div>13</div><div>14</div><div>15</div><div>16</div><div>17</div><div></div><div></div><div>18</div><div>19</div><div>20</div><div>21</div></div>
<div class="ed" style="left:758px;top:331px"><div><span class="h">GET /cgi-bin/avatar.php?</span><span class="p">avatar=</span><span class="g">wiener</span><span class="h"> HTTP/2</span></div><div><span class="h">Host: </span><span class="v">0a48002003c8fd57815f6b5800af0026.web-security-academy.net</span></div><div><span class="h">Cookie: </span><span class="p">session=</span><span class="g">hcaeSolyRxAZnPx92uaOsQoHlf3yjNwf</span></div><div><span class="h">Cache-Control: </span><span class="v">max-age=0</span></div><div><span class="h">Sec-Ch-Ua: </span><span class="v">&quot;Not:A-Brand&quot;;v=&quot;99&quot;, &quot;Brave&quot;;v=&quot;145&quot;, &quot;Chromium&quot;;v=&quot;145&quot;</span></div><div><span class="h">Sec-Ch-Ua-Mobile: </span><span class="v">?0</span></div><div><span class="h">Sec-Ch-Ua-Platform: </span><span class="v">&quot;Linux&quot;</span></div><div><span class="h">Upgrade-Insecure-Requests: </span><span class="v">1</span></div><div><span class="h">User-Agent: </span><span class="v">Mozilla/5.0 (X11; Linux x86_64) AppleWebKit/537.36 (KHTML,</span></div><div><span class="v">like Gecko) Chrome/145.0.0.0 Safari/537.36</span></div><div><span class="h">Accept: </span></div><div><span class="v">text/html,application/xhtml+xml,application/xml;q=0.9,image/avif,image/we</span></div><div><span class="v">bp,image/apng,*/*;q=0.8</span></div><div><span class="h">Sec-Gpc: </span><span class="v">1</span></div><div><span class="h">Accept-Language: </span><span class="v">en-GB,en;q=0.5</span></div><div><span class="h">Sec-Fetch-Site: </span><span class="v">same-origin</span></div><div><span class="h">Sec-Fetch-Mode: </span><span class="v">navigate</span></div><div><span class="h">Sec-Fetch-User: </span><span class="v">?1</span></div><div><span class="h">Sec-Fetch-Dest: </span><span class="v">document</span></div><div><span class="h">Referer: </span></div><div><span class="v">https://0a48002003c8fd57815f6b5800af0026.web-security-academy.net/my-acco</span></div><div><span class="v">unt?id=wiener</span></div><div><span class="h">Accept-Encoding: </span><span class="v">gzip, deflate, br</span></div><div><span class="h">Priority: </span><span class="v">u=0, i</span></div><div></div><div></div></div>
<div class="a" style="left:1286px;top:328px;width:554px;height:512px;overflow:hidden">
<div class="no" style="left:-3.4px;top:2px"><div>1</div><div>2</div><div>3</div><div>4</div><div>5</div><div>6</div><div>7</div><div>8</div><div>9</div><div></div><div>10</div><div></div><div></div><div></div><div>11</div><div>12</div><div></div><div></div><div></div><div></div><div>13</div><div>14</div><div>15</div><div></div><div></div><div></div><div>16</div><div></div><div></div><div></div><div>17</div><div></div><div></div><div></div><div>18</div><div></div><div></div></div>
<div class="ed" style="left:27.5px;top:2px"><div><span class="h">HTTP/2 200 OK</span></div><div><span class="h">Content-Type: </span><span class="v">image/jpeg</span></div><div><span class="h">X-Frame-Options: </span><span class="v">SAMEORIGIN</span></div><div><span class="h">Content-Length: </span><span class="v">22979</span></div><div></div><div><span class="h">ÿØÿÛC</span></div><div></div><div></div><div><span class="h">ÿÛCÿÀ!ú&quot;ÿÄ</span></div><div><span class="h">ÿÄI!1&quot;AQ2aq#B±3Rr¡Á$bÑ4T²áðñ%5s¢CStÂÒÿÄÿÄ4!1AQaq&quot;23±áð¡ÁÑñ#BRSÿÚ?ÿjI</span></div><div><span class="h">4&lt;cóþQµ@öÓ]¦;PE#Iâ&#x27;rÆ3íùÒ7KÉ 8jX¶=5ÏÈSÊÏÛïÉ]fàêIf,J$P#qè÷:ÎÖiJÀnÎ|±:¿Õ}³ì</span></div><div><span class="h">íùóþÓ4m7ÎRMN_Ã7roÓKë$jpòF§ÙþgWè5f*ÛÄuñÀðÙÙa+gyx|åsÕ´¢ºHeÙáÅq²ß®-õ!Vµl.ÕeÚ</span></div><div><span class="h">[oqú5ë®b&amp;âX&quot;&quot;~¾tÃKÿUÒUVÃLÔqI*ñrpO¿¶ºOÀ&amp;:£¨ùºH&#x27;!c2¦í»ÁÇ&#x27;/ãV¿îê+Ôký=¼Ùç#õÒµ</span></div><div><span class="h">¿úÞ</span></div><div><span class="h">f®§¢ -£È`!ÄÃõorrlíí¦Ôð</span></div><div><span class="h">X*¥ýË,±teã§opyÓnl`Çöïí¤ÿúézëÍM4z.Zrcn}ÈÔX¸|çG3´®·òüjNyDÄcuÜ@$+çÏ»Xj³fÜùçí</span></div><div><span class="h">,®;ÇIËÅê®xaãÞª1¶¬+?ÅJµ</span></div><div><span class="h">}/»ýlöÕ?zéÛÄý&quot;Ý¾Á_Mó KÞºy|C_a¨OzÆ!m¤ÿoÛï=»A×æõgsJAQ»é¾?³um(Rp£woMxRÝÕµEBâ</span></div><div><span class="h">¶W-ó¦Üë£Þë¬n:ê;´Æ3*:|uÚ¢»ÓVAâÆÄpG¶-B±Û»#í¯2[~)~òÄ¨deç±àgVïNõä5ªñZLüãÓ8Ñ5^</span></div><div><span class="h">pë*z]ãÊ(d~åíÁ</span></div><div><span class="h">¾{é{-Â*êy#N¾¤Ö?lpp{ñ¢%0qílÒnÃ7º*4iP£ç\q¥4</span></div><div><span class="h">ª Ó</span></div><div><span class="h">êxÂãnr4MRñý5ò¢WË.së¨4Pu(cfNß}&gt;Æ vÏÛSPZÁlãJÉ@qÈÎ5 1691¯òÓ¡iB2NRÓRQ)</span></div><div><span class="h">e@ãHÅ!ÏþëÉªå¢ØiO#ßO{,yúòÒ²ûùhµ®·w]&#x27;ò_m,FÌðÒõòfGòõ&quot;@Áüû¶öé?}EÛ,BjZªÓ4#È¾ÝØ</span></div><div><span class="h">R}G¸Ôé!ÚZ?ZÿþuÕöë=ÇÆË&lt;nX¸$qÇ?}qÚ=YÒä(Îqûfjé4&amp;ðÅòl°jæ®ûÍÿí3®¬JHgo!2F]#w±çg</span></div><div><span class="h">: ÆÊÃ=²F¯®ã8¡cWT62O®&gt;ú3µY×iÏ8og#-ÿFHÿ´õ?öjoæÿóÔeuI¸TµDÑÆ®Ê«që®w§HdhS;¤</span></div><div><span class="h">JwÉÒ/&quot;CI3¬h£ÌÌpë¬í*±¹2&gt;³6-Céªjûùòælêî¦ºõ¥ ËO%gÌÖÃ°,{Â³ð3å\¶{sÆ¾CUQÕsXb¢¶Ó</span></div><div><span class="h">;$L®FÕCú&lt;Ýÿ^5Fü¯â,MSÃo´UÕÀèà</span></div><div><span class="h">&gt; øW¿6&lt;7gº9â`ã)c-:eJà&lt;¤&lt;¡Oë£»[ã¨òþLÚìvõ?A%¡iíWiÚÅ,¾*nDd8Ï+é¦ÚNø_úí}KG%Ò,o</span></div><div><span class="h">3¯&#x27;</span></div><div><span class="h">IÉr7eG&lt;&lt;¶OSMU¾oÍ½§8æ²£ÇS=4Bet«êIÖ8á4.jÙ°LóXtegÃî®¯£½I$-$õHÀÅ$Eò§ÒI\[%wã_L</span></div><div><span class="h">°¿ükÐUÒYÿggTÑ¥Æç8¦ñäÇO&quot;cåSuKõwC¿D\®Öøe¦¡ÜÒ[jåÂÅ2dª®üa(±s-í.¤ÚNzõýç%®Ò=$xâ</span></div><div><span class="h">8®k-GØ2HÿÖ5Í-i( 0veÁPO¾s¥-3Ã+OàEQKGß·Gh3</span></div><div><span class="h">&gt;YðûÏ§¾´WMX2Zõ¦Ý²¦×M(®jHÀÃþÇ&lt;wÖé*YáUñ!&gt;&quot;¹ÏvÛúû}ô÷Ãx.&amp;±â</span></div><div><span class="h">NT®Á#×:¥éê{¶j-µ´tíæÈ#Xj¹:Ü\ã*ÕÕ5EEJÅÌ´DwqÎ÷íÆºVãZµµuõ*`»Óñî=]$²Yå</span></div><div><span class="h">ÛqfÆsÛRtVÚúja³²ò&gt;yo¶=uF6Ð|mD|B#-ìd\â:¿l5¿=L\î÷ÇÛ^,éØ&amp;¡¨s;²SwûjÿøuxÉGûÉUb#</span></div><div><span class="h">dåüÐà·¤ÛVÎ?ìã;dè¬ìFËÌOÜ8ö×GûWXØ###·4.à,Èà×¦YôÆú¬AD.éúö,ìõ÷¤í×tL¸×öÒÄ¦²ºn]</span></div></div></div>
<div class="ln" style="left:731px;top:840px;width:1110px;height:1px"></div>
<svg style="left:737px;top:852px" width="30.5" height="30.5" viewBox="0 0 30 30" fill="none" stroke="#d0d0d0" stroke-width="2.7" stroke-linecap="round"><circle cx="15" cy="15" r="13.5"/><path d="M10.8 11.4a4.2 4.2 0 1 1 6.3 3.7c-1.5.9-2.1 1.7-2.1 3.3"/><circle cx="15" cy="22.4" r="0.7" stroke-width="2"/></svg>
<svg style="left:774.6px;top:851.6px" width="31.6" height="31.6" viewBox="0 0 100 100"><path d="M39.7 16.6 L40.9 4.9 L59.1 4.9 L60.3 16.6 L66.3 19.0 L75.4 11.7 L88.3 24.6 L81.0 33.7 L83.4 39.7 L95.1 40.9 L95.1 59.1 L83.4 60.3 L81.0 66.3 L88.3 75.4 L75.4 88.3 L66.3 81.0 L60.3 83.4 L59.1 95.1 L40.9 95.1 L39.7 83.4 L33.7 81.0 L24.6 88.3 L11.7 75.4 L19.0 66.3 L16.6 60.3 L4.9 59.1 L4.9 40.9 L16.6 39.7 L19.0 33.7 L11.7 24.6 L24.6 11.7 L33.7 19.0Z" fill="none" stroke="#d0d0d0" stroke-width="9.2" stroke-linejoin="round"/><circle cx="50" cy="50" r="15.5" fill="none" stroke="#d0d0d0" stroke-width="9.2"/></svg>
<div class="btn" style="left:812px;top:851px;width:33px;height:33px;background:#4c4f52;border:1px solid #5a5d5f"></div>
<div class="btn" style="left:850px;top:851px;width:33px;height:33px;background:#4c4f52;border:1px solid #5a5d5f"></div>
<svg style="left:812px;top:851px" width="33" height="33" viewBox="0 0 33 33" fill="none" stroke="#c8c8c8" stroke-width="1.9"><path d="M25 16.5H8.5M15.5 9 8 16.5 15.5 24"/></svg>
<svg style="left:850px;top:851px" width="33" height="33" viewBox="0 0 33 33" fill="none" stroke="#c8c8c8" stroke-width="1.9"><path d="M8 16.5H24.5M17.5 9 25 16.5 17.5 24"/></svg>
<div class="btn" style="left:893px;top:852px;width:254.5px;height:31px;background:#3b3d3f;border:1px solid #5c5e60"></div>
<svg style="left:1121px;top:858px" width="20" height="20" viewBox="0 0 20 20" fill="none" stroke="#c8c8c8" stroke-width="1.8" stroke-linecap="round"><circle cx="11.6" cy="7.6" r="6"/><path d="M7.4 12 1 18.6"/></svg>
<svg style="left:1292.3px;top:852px" width="30.5" height="30.5" viewBox="0 0 30 30" fill="none" stroke="#d0d0d0" stroke-width="2.7" stroke-linecap="round"><circle cx="15" cy="15" r="13.5"/><path d="M10.8 11.4a4.2 4.2 0 1 1 6.3 3.7c-1.5.9-2.1 1.7-2.1 3.3"/><circle cx="15" cy="22.4" r="0.7" stroke-width="2"/></svg>
<svg style="left:1329.9px;top:851.6px" width="31.6" height="31.6" viewBox="0 0 100 100"><path d="M39.7 16.6 L40.9 4.9 L59.1 4.9 L60.3 16.6 L66.3 19.0 L75.4 11.7 L88.3 24.6 L81.0 33.7 L83.4 39.7 L95.1 40.9 L95.1 59.1 L83.4 60.3 L81.0 66.3 L88.3 75.4 L75.4 88.3 L66.3 81.0 L60.3 83.4 L59.1 95.1 L40.9 95.1 L39.7 83.4 L33.7 81.0 L24.6 88.3 L11.7 75.4 L19.0 66.3 L16.6 60.3 L4.9 59.1 L4.9 40.9 L16.6 39.7 L19.0 33.7 L11.7 24.6 L24.6 11.7 L33.7 19.0Z" fill="none" stroke="#d0d0d0" stroke-width="9.2" stroke-linejoin="round"/><circle cx="50" cy="50" r="15.5" fill="none" stroke="#d0d0d0" stroke-width="9.2"/></svg>
<div class="btn" style="left:1367.3px;top:851px;width:33px;height:33px;background:#4c4f52;border:1px solid #5a5d5f"></div>
<div class="btn" style="left:1405.3px;top:851px;width:33px;height:33px;background:#4c4f52;border:1px solid #5a5d5f"></div>
<svg style="left:1367.3px;top:851px" width="33" height="33" viewBox="0 0 33 33" fill="none" stroke="#c8c8c8" stroke-width="1.9"><path d="M25 16.5H8.5M15.5 9 8 16.5 15.5 24"/></svg>
<svg style="left:1405.3px;top:851px" width="33" height="33" viewBox="0 0 33 33" fill="none" stroke="#c8c8c8" stroke-width="1.9"><path d="M8 16.5H24.5M17.5 9 25 16.5 17.5 24"/></svg>
<div class="btn" style="left:1448.3px;top:852px;width:254.5px;height:31px;background:#3b3d3f;border:1px solid #5c5e60"></div>
<svg style="left:1676.3px;top:858px" width="20" height="20" viewBox="0 0 20 20" fill="none" stroke="#c8c8c8" stroke-width="1.8" stroke-linecap="round"><circle cx="11.6" cy="7.6" r="6"/><path d="M7.4 12 1 18.6"/></svg>
<div class="ln" style="left:731px;top:895px;width:1133px;height:1px"></div>
<div class="ln" style="left:731px;top:931.5px;width:1133px;height:1px"></div>
<div class="a" style="left:856px;top:937px;width:6.5px;height:6.5px;border-radius:50%;background:#0a96ff"></div>
<div class="a" style="left:1008px;top:937px;width:6.5px;height:6.5px;border-radius:50%;background:#0a96ff"></div>
<div class="a" style="left:1828.5px;top:940px;width:21.5px;height:21.5px;border-radius:50%;border:2px solid #c8c8c8"></div>
<span class="t" style="left:104.00px;top:9.35px;font-size:14px;font-weight:400;color:#e3e3e6;letter-spacing:0.198px">https://0a48002003c8fd57815f6b5800af0026.web-security-academy.net/cgi-bin/avatar.php?avatar=wiener</span>
<span class="t" style="left:771.00px;top:76.92px;font-size:19px;font-weight:400;color:#c9c9c9;letter-spacing:1.144px">Burp</span>
<span class="t" style="left:830.00px;top:76.92px;font-size:19px;font-weight:400;color:#c9c9c9;letter-spacing:0.491px">Project</span>
<span class="t" style="left:908.80px;top:76.92px;font-size:19px;font-weight:400;color:#c9c9c9;letter-spacing:0.721px">Intruder</span>
<span class="t" style="left:996.60px;top:76.92px;font-size:19px;font-weight:400;color:#c9c9c9;letter-spacing:0.224px">Repeater</span>
<span class="t" style="left:1094.00px;top:76.92px;font-size:19px;font-weight:400;color:#c9c9c9;letter-spacing:0.627px">View</span>
<span class="t" style="left:1153.50px;top:76.92px;font-size:19px;font-weight:400;color:#c9c9c9;letter-spacing:1.230px">Help</span>
<span class="t" style="left:1372.50px;top:76.92px;font-size:19px;font-weight:400;color:#8d8f91;letter-spacing:0.311px">Burp Suite Professional v2025.11.5 - Temporary Project - </span>
<span class="t" style="left:745.80px;top:107.52px;font-size:19px;font-weight:400;color:#c9c9c9;letter-spacing:0.302px">Dashboard</span>
<span class="t" style="left:874.30px;top:107.52px;font-size:19px;font-weight:400;color:#c9c9c9;letter-spacing:0.794px">Target</span>
<span class="t" style="left:964.50px;top:107.52px;font-size:19px;font-weight:400;color:#c9c9c9;letter-spacing:0.208px">Proxy</span>
<span class="t" style="left:1047.70px;top:107.52px;font-size:19px;font-weight:400;color:#c9c9c9;letter-spacing:0.735px">Intruder</span>
<span class="t" style="left:1152.50px;top:107.52px;font-size:19px;font-weight:400;color:#c9c9c9;letter-spacing:0.238px">Repeater</span>
<span class="t" style="left:1267.30px;top:107.52px;font-size:19px;font-weight:400;color:#c9c9c9;letter-spacing:-0.022px">Sequencer</span>
<span class="t" style="left:1393.90px;top:107.52px;font-size:19px;font-weight:400;color:#c9c9c9;letter-spacing:0.319px">Decoder</span>
<span class="t" style="left:1502.60px;top:107.52px;font-size:19px;font-weight:400;color:#c9c9c9;letter-spacing:0.408px">Comparer</span>
<span class="t" style="left:1624.80px;top:107.52px;font-size:19px;font-weight:400;color:#c9c9c9;letter-spacing:0.273px">Logger</span>
<span class="t" style="left:1720.60px;top:107.52px;font-size:19px;font-weight:400;color:#c9c9c9;letter-spacing:0.288px">Organizer</span>
<span class="t" style="left:1840.40px;top:107.52px;font-size:19px;font-weight:400;color:#c9c9c9;letter-spacing:0.311px">Extensions</span>
<span class="t" style="left:739.40px;top:146.92px;font-size:19px;font-weight:400;color:#dadada;letter-spacing:0.311px">1</span>
<span class="t" style="left:758.30px;top:193.52px;font-size:19px;font-weight:700;color:#ffffff;letter-spacing:-0.549px">Send</span>
<span class="t" style="left:880.00px;top:193.52px;font-size:19px;font-weight:400;color:#86898b;letter-spacing:0.096px">Cancel</span>
<span class="t" style="left:1146.00px;top:193.72px;font-size:19px;font-weight:700;color:#ffffff;letter-spacing:-0.321px">Burp AI</span>
<span class="t" style="left:1390.30px;top:193.72px;font-size:19px;font-weight:700;color:#c3c3c3;letter-spacing:0.920px;word-spacing:-3px">Target: https://0a48002003c8fd57815f6b5800af0026.web-security-academy.net</span>
<span class="t" style="left:741.30px;top:265.62px;font-size:22.9px;font-weight:700;color:#ffffff;letter-spacing:-0.015px">Request</span>
<span class="t" style="left:1296.20px;top:264.62px;font-size:22.9px;font-weight:700;color:#ffffff;letter-spacing:-0.224px">Response</span>
<span class="t" style="left:745.70px;top:302.92px;font-size:19px;font-weight:400;color:#e6e6e6;letter-spacing:0.955px">Pretty</span>
<span class="t" style="left:831.20px;top:302.92px;font-size:19px;font-weight:400;color:#bdbdbd;letter-spacing:-0.544px">Raw</span>
<span class="t" style="left:898.90px;top:302.92px;font-size:19px;font-weight:400;color:#bdbdbd;letter-spacing:0.056px">Hex</span>
<span class="t" style="left:1300.80px;top:301.92px;font-size:19px;font-weight:400;color:#e6e6e6;letter-spacing:0.855px">Pretty</span>
<span class="t" style="left:1386.30px;top:301.92px;font-size:19px;font-weight:400;color:#bdbdbd;letter-spacing:-0.794px">Raw</span>
<span class="t" style="left:1454.00px;top:301.92px;font-size:19px;font-weight:400;color:#bdbdbd;letter-spacing:-0.144px">Hex</span>
<span class="t" style="left:1518.00px;top:301.92px;font-size:19px;font-weight:400;color:#bdbdbd;letter-spacing:0.062px">Render</span>
<span class="t" style="left:903.50px;top:858.92px;font-size:19px;font-weight:400;color:#85878a;letter-spacing:-0.147px">Search</span>
<span class="t" style="left:1458.90px;top:858.42px;font-size:19px;font-weight:400;color:#85878a;letter-spacing:-0.247px">Search</span>
<span class="t" style="left:1170.40px;top:858.92px;font-size:19px;font-weight:400;color:#c9c9c9;letter-spacing:0.616px">0 highlights</span>
<span class="t" style="left:1725.80px;top:858.42px;font-size:19px;font-weight:400;color:#c9c9c9;letter-spacing:0.589px">0 highlights</span>
<span class="t" style="left:736.00px;top:904.92px;font-size:19px;font-weight:400;color:#c3c3c3;letter-spacing:0.315px">Done</span>
<span class="t" style="left:745.80px;top:939.92px;font-size:19px;font-weight:400;color:#c3c3c3;letter-spacing:-0.074px">Event log (1)</span>
<span class="t" style="left:884.40px;top:939.92px;font-size:19px;font-weight:400;color:#c3c3c3;letter-spacing:0.065px">All issues (29)</span>
<span class="t" style="left:1851.20px;top:243.42px;font-size:22.9px;font-weight:700;color:#e0e0e0;letter-spacing:-0.120px">Inspector</span>
<span class="t" style="left:1851.00px;top:294.92px;font-size:19px;font-weight:400;color:#c9c9c9;letter-spacing:0.311px">Request</span>
<span class="t" style="left:1851.00px;top:342.92px;font-size:19px;font-weight:400;color:#c9c9c9;letter-spacing:0.311px">Request</span>
<span class="t" style="left:1851.00px;top:390.92px;font-size:19px;font-weight:400;color:#c9c9c9;letter-spacing:0.311px">Request</span>
<span class="t" style="left:1851.00px;top:438.92px;font-size:19px;font-weight:400;color:#c9c9c9;letter-spacing:0.311px">Request</span>
<span class="t" style="left:1851.00px;top:486.92px;font-size:19px;font-weight:400;color:#c9c9c9;letter-spacing:0.311px">Request</span>
<span class="t" style="left:1851.00px;top:534.92px;font-size:19px;font-weight:400;color:#c9c9c9;letter-spacing:0.311px">Request</span>
</body></html>
